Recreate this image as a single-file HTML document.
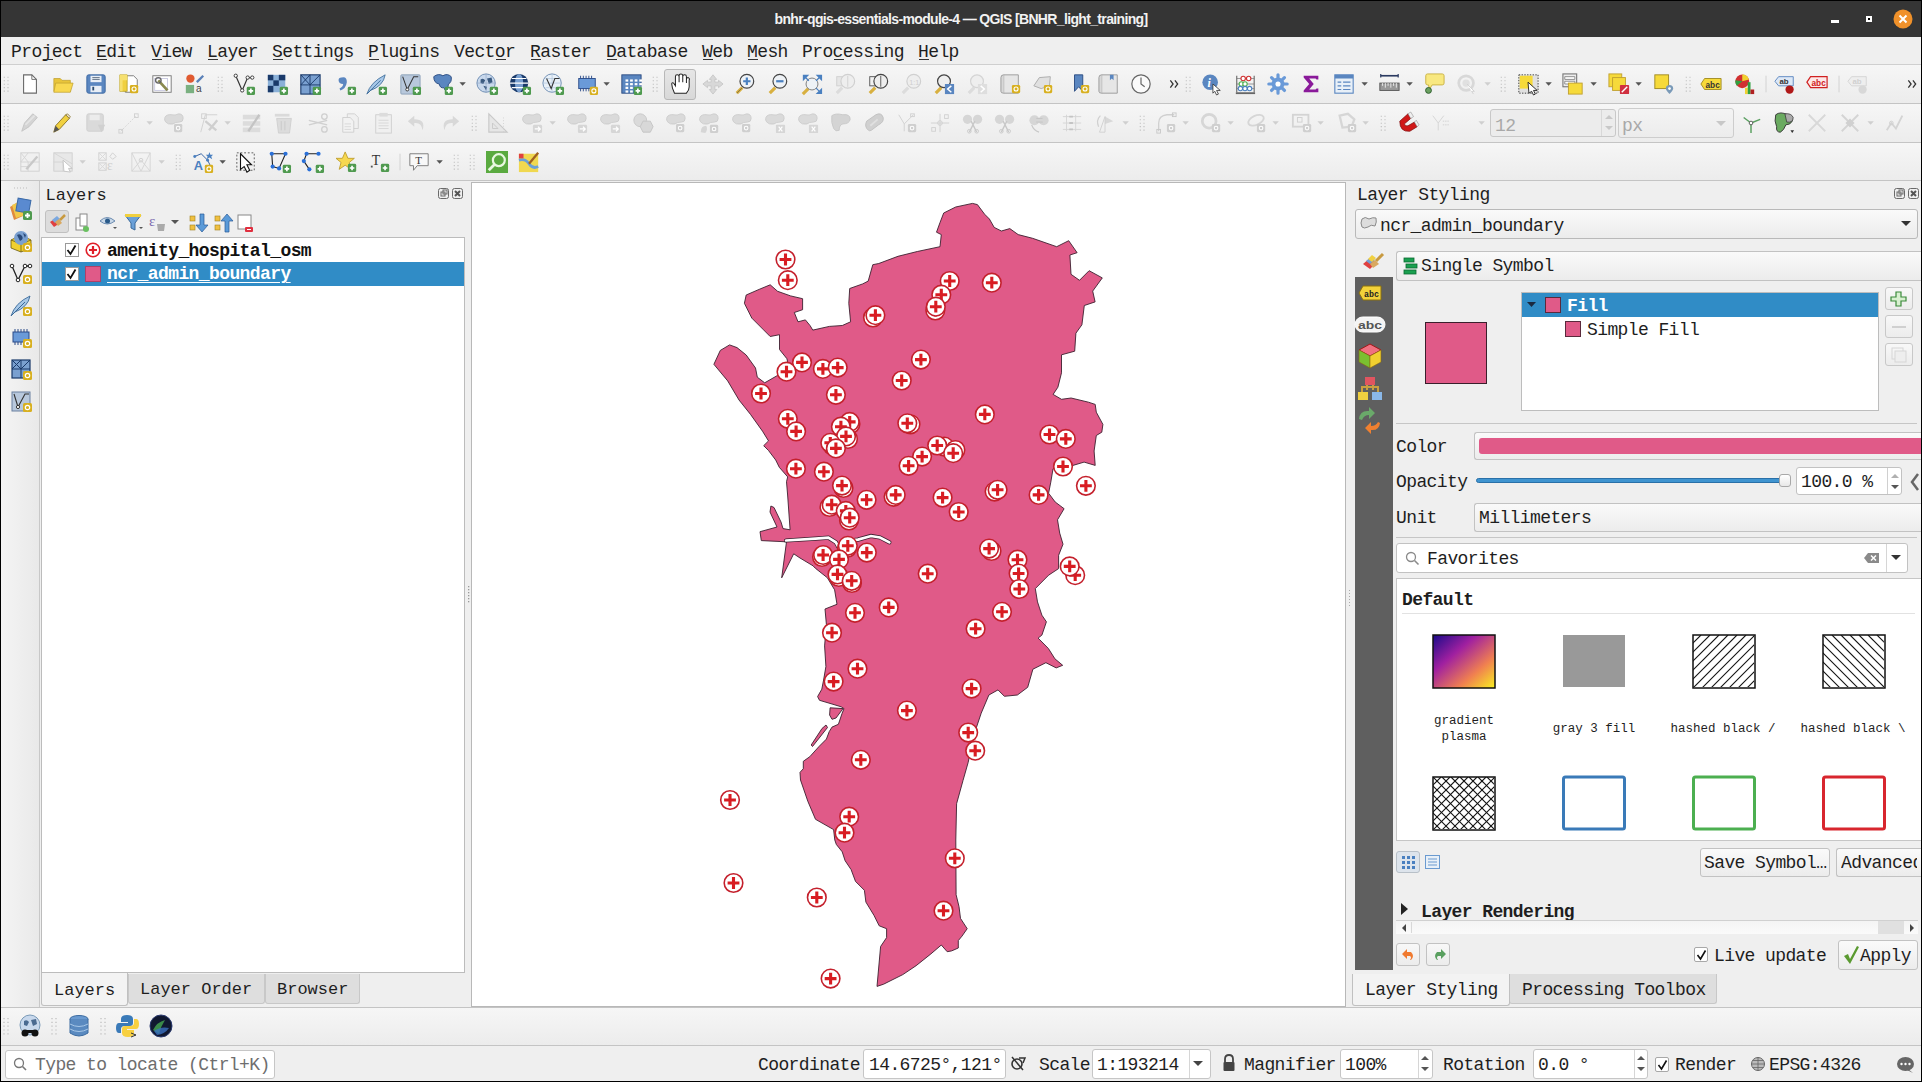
<!DOCTYPE html><html><head><meta charset="utf-8"><style>
html,body{margin:0;padding:0;}
body{width:1922px;height:1082px;position:relative;overflow:hidden;background:#efefef;font-family:"Liberation Mono",monospace;}
.t{position:absolute;white-space:pre;line-height:1;}
svg{position:absolute;overflow:visible;}
</style></head><body>
<div style="position:absolute;left:0px;top:0px;width:1922px;height:1082px;background:#000"></div>
<div style="position:absolute;left:1px;top:1px;width:1920px;height:36px;background:#353535"></div>
<div class="t" style="left:0px;top:12px;font-size:14px;color:#f2f2f2;font-weight:bold;font-family:'Liberation Sans', sans-serif;width:1922px;text-align:center;letter-spacing:-0.65px;">bnhr-qgis-essentials-module-4 — QGIS [BNHR_light_training]</div>
<div style="position:absolute;left:1831px;top:20px;width:8px;height:3px;background:#fff"></div>
<div style="position:absolute;left:1866px;top:16px;width:6px;height:6px;background:#fff"></div>
<div style="position:absolute;left:1868px;top:18px;width:2px;height:2px;background:#000"></div>
<svg style="left:0;top:0" width="1922" height="40"><circle cx="1903" cy="19" r="9.5" fill="#f0912a"/><path d="M1899.5 15.5 L1906.5 22.5 M1906.5 15.5 L1899.5 22.5" stroke="#fff" stroke-width="2"/></svg>
<div style="position:absolute;left:1px;top:37px;width:1920px;height:1044px;background:#efefef"></div>
<div class="t" style="left:11px;top:43.2px;font-size:18px;color:#1e1e1e;font-weight:normal;font-family:'Liberation Mono', monospace;letter-spacing:-0.60px;">Project</div>
<div style="position:absolute;left:43px;top:59px;width:10px;height:1px;background:#333"></div>
<div class="t" style="left:96px;top:43.2px;font-size:18px;color:#1e1e1e;font-weight:normal;font-family:'Liberation Mono', monospace;letter-spacing:-0.60px;">Edit</div>
<div style="position:absolute;left:97px;top:59px;width:10px;height:1px;background:#333"></div>
<div class="t" style="left:151px;top:43.2px;font-size:18px;color:#1e1e1e;font-weight:normal;font-family:'Liberation Mono', monospace;letter-spacing:-0.60px;">View</div>
<div style="position:absolute;left:152px;top:59px;width:10px;height:1px;background:#333"></div>
<div class="t" style="left:207px;top:43.2px;font-size:18px;color:#1e1e1e;font-weight:normal;font-family:'Liberation Mono', monospace;letter-spacing:-0.60px;">Layer</div>
<div style="position:absolute;left:208px;top:59px;width:10px;height:1px;background:#333"></div>
<div class="t" style="left:272px;top:43.2px;font-size:18px;color:#1e1e1e;font-weight:normal;font-family:'Liberation Mono', monospace;letter-spacing:-0.60px;">Settings</div>
<div style="position:absolute;left:273px;top:59px;width:10px;height:1px;background:#333"></div>
<div class="t" style="left:368px;top:43.2px;font-size:18px;color:#1e1e1e;font-weight:normal;font-family:'Liberation Mono', monospace;letter-spacing:-0.60px;">Plugins</div>
<div style="position:absolute;left:369px;top:59px;width:10px;height:1px;background:#333"></div>
<div class="t" style="left:454px;top:43.2px;font-size:18px;color:#1e1e1e;font-weight:normal;font-family:'Liberation Mono', monospace;letter-spacing:-0.60px;">Vector</div>
<div style="position:absolute;left:496px;top:59px;width:10px;height:1px;background:#333"></div>
<div class="t" style="left:530px;top:43.2px;font-size:18px;color:#1e1e1e;font-weight:normal;font-family:'Liberation Mono', monospace;letter-spacing:-0.60px;">Raster</div>
<div style="position:absolute;left:531px;top:59px;width:10px;height:1px;background:#333"></div>
<div class="t" style="left:606px;top:43.2px;font-size:18px;color:#1e1e1e;font-weight:normal;font-family:'Liberation Mono', monospace;letter-spacing:-0.60px;">Database</div>
<div style="position:absolute;left:607px;top:59px;width:10px;height:1px;background:#333"></div>
<div class="t" style="left:702px;top:43.2px;font-size:18px;color:#1e1e1e;font-weight:normal;font-family:'Liberation Mono', monospace;letter-spacing:-0.60px;">Web</div>
<div style="position:absolute;left:703px;top:59px;width:10px;height:1px;background:#333"></div>
<div class="t" style="left:747px;top:43.2px;font-size:18px;color:#1e1e1e;font-weight:normal;font-family:'Liberation Mono', monospace;letter-spacing:-0.60px;">Mesh</div>
<div style="position:absolute;left:748px;top:59px;width:10px;height:1px;background:#333"></div>
<div class="t" style="left:802px;top:43.2px;font-size:18px;color:#1e1e1e;font-weight:normal;font-family:'Liberation Mono', monospace;letter-spacing:-0.60px;">Processing</div>
<div style="position:absolute;left:834px;top:59px;width:10px;height:1px;background:#333"></div>
<div class="t" style="left:918px;top:43.2px;font-size:18px;color:#1e1e1e;font-weight:normal;font-family:'Liberation Mono', monospace;letter-spacing:-0.60px;">Help</div>
<div style="position:absolute;left:919px;top:59px;width:10px;height:1px;background:#333"></div>
<div style="position:absolute;left:1px;top:64px;width:1920px;height:1px;background:#cfcfcf"></div>
<div style="position:absolute;left:1px;top:65px;width:1920px;height:38px;background:linear-gradient(#f6f6f6,#ececec)"></div>
<div style="position:absolute;left:1px;top:103px;width:1920px;height:1px;background:#c4c4c4"></div>
<div style="position:absolute;left:1px;top:104px;width:1920px;height:38px;background:linear-gradient(#f6f6f6,#ececec)"></div>
<div style="position:absolute;left:1px;top:142px;width:1920px;height:1px;background:#c4c4c4"></div>
<div style="position:absolute;left:1px;top:143px;width:1920px;height:37px;background:linear-gradient(#f6f6f6,#ececec)"></div>
<div style="position:absolute;left:1px;top:180px;width:1920px;height:1px;background:#c4c4c4"></div>
<div style="position:absolute;left:1px;top:181px;width:38px;height:826px;background:linear-gradient(90deg,#f4f4f4,#e9e9e9)"></div>
<div style="position:absolute;left:39px;top:181px;width:1px;height:826px;background:#c8c8c8"></div>
<div class="t" style="left:45.5px;top:187px;font-size:17px;color:#1e1e1e;font-weight:normal;font-family:'Liberation Mono', monospace;letter-spacing:0.00px;">Layers</div>
<div style="position:absolute;left:41px;top:237px;width:424px;height:736px;background:#fff;box-sizing:border-box;border:1px solid #bcbcbc"></div>
<div style="position:absolute;left:42px;top:262px;width:422px;height:24px;background:#308cc6"></div>
<div style="position:absolute;left:128px;top:974px;width:137px;height:30px;background:#dedede;box-sizing:border-box;border:1px solid #c8c8c8;border-top:none;border-radius:0 0 3px 3px"></div>
<div style="position:absolute;left:265px;top:974px;width:95px;height:30px;background:#dedede;box-sizing:border-box;border:1px solid #c8c8c8;border-top:none;border-radius:0 0 3px 3px"></div>
<div style="position:absolute;left:41px;top:973px;width:87px;height:33px;background:#f3f3f3;box-sizing:border-box;border:1px solid #c0c0c0;border-top:none;border-radius:0 0 3px 3px"></div>
<div class="t" style="left:54px;top:982px;font-size:17px;color:#1e1e1e;font-weight:normal;font-family:'Liberation Mono', monospace;letter-spacing:0.00px;">Layers</div>
<div class="t" style="left:140px;top:981px;font-size:17px;color:#1e1e1e;font-weight:normal;font-family:'Liberation Mono', monospace;letter-spacing:0.00px;">Layer Order</div>
<div class="t" style="left:277px;top:981px;font-size:17px;color:#1e1e1e;font-weight:normal;font-family:'Liberation Mono', monospace;letter-spacing:0.00px;">Browser</div>
<svg style="left:467px;top:586px" width="4" height="20"><rect x="1" y="0" width="1.3" height="1.3" fill="#999"/><rect x="1" y="3" width="1.3" height="1.3" fill="#999"/><rect x="1" y="6" width="1.3" height="1.3" fill="#999"/><rect x="1" y="9" width="1.3" height="1.3" fill="#999"/><rect x="1" y="12" width="1.3" height="1.3" fill="#999"/><rect x="1" y="15" width="1.3" height="1.3" fill="#999"/></svg>
<svg style="left:1348px;top:590px" width="4" height="50"><rect x="1" y="0" width="1" height="1" fill="#aaa"/><rect x="1" y="3" width="1" height="1" fill="#aaa"/><rect x="1" y="6" width="1" height="1" fill="#aaa"/><rect x="1" y="9" width="1" height="1" fill="#aaa"/><rect x="1" y="12" width="1" height="1" fill="#aaa"/><rect x="1" y="15" width="1" height="1" fill="#aaa"/></svg>
<div style="position:absolute;left:471px;top:182px;width:875px;height:825px;background:#fff;box-sizing:border-box;border:1px solid #b8b8b8"></div>
<div style="position:absolute;left:1px;top:1007px;width:1920px;height:1px;background:#c4c4c4"></div>
<div style="position:absolute;left:1px;top:1008px;width:1920px;height:37px;background:linear-gradient(#f6f6f6,#ececec)"></div>
<div style="position:absolute;left:1px;top:1045px;width:1920px;height:1px;background:#c4c4c4"></div>
<div style="position:absolute;left:1px;top:1046px;width:1920px;height:35px;background:#efefef"></div>
<svg style="left:0;top:0" width="1922" height="1082" viewBox="0 0 1922 1082"><polygon points="955.7,207.0 972.5,203.4 977.4,204.6 984.6,214.2 989.4,219.0 994.2,227.4 1001.4,231.0 1009.8,228.6 1018.2,234.6 1032.6,238.3 1056.7,246.7 1068.7,240.7 1077.1,252.7 1069.9,255.0 1071.0,274.3 1079.5,280.3 1089.1,270.7 1102.3,277.9 1092.7,291.1 1095.1,301.9 1084.3,305.5 1081.9,324.8 1075.9,333.2 1074.7,351.2 1061.5,354.8 1061.5,372.8 1057.9,387.2 1053.1,394.4 1061.5,399.3 1071.1,398.0 1088.5,402.2 1095.2,404.4 1096.3,412.2 1102.9,424.4 1101.8,432.2 1096.3,435.5 1094.1,451.0 1095.2,465.4 1084.1,462.1 1073.0,465.4 1053.0,468.8 1050.8,482.1 1048.6,493.2 1055.2,502.0 1064.1,508.7 1057.5,519.8 1059.7,533.1 1063.0,544.2 1058.6,555.3 1058.6,568.6 1048.6,575.2 1035.3,588.6 1037.5,601.9 1041.9,615.2 1046.4,621.8 1041.9,635.1 1038.1,638.1 1048.4,648.5 1054.9,658.8 1062.7,665.3 1056.2,667.9 1045.9,662.7 1032.9,669.2 1027.7,687.3 1017.4,695.0 1004.4,696.3 998.0,689.9 988.9,695.0 981.2,713.2 973.4,736.5 968.2,762.3 963.0,780.5 956.6,803.7 955.8,840.0 956.1,894.7 959.0,906.6 960.5,918.4 967.2,928.7 962.0,936.1 958.3,940.6 958.3,948.0 951.6,950.9 947.2,951.7 941.3,945.0 930.9,953.9 916.1,965.7 902.8,974.6 883.6,984.2 877.0,986.4 880.6,946.5 886.6,937.6 886.6,928.7 879.2,925.8 874.0,915.4 865.9,902.1 864.4,890.3 855.5,881.4 851.1,869.6 845.1,860.7 842.2,851.8 836.3,844.4 834.8,840.0 833.6,829.6 815.5,819.3 807.8,801.2 800.5,780.0 800.0,772.4 803.3,768.7 803.3,761.3 809.8,756.7 819.0,746.5 826.4,739.1 829.2,731.7 832.0,727.1 838.4,724.3 842.1,713.3 844.0,708.6 841.2,706.8 832.0,704.0 819.5,700.3 817.6,696.6 821.8,689.2 823.6,680.0 825.9,666.6 824.6,645.9 826.4,624.5 825.0,609.0 837.0,604.3 834.6,589.8 827.4,577.8 815.3,568.2 813.0,565.8 800.0,558.0 793.7,553.8 781.7,577.8 786.5,541.8 761.3,540.6 760.0,531.7 777.0,527.0 770.0,512.0 770.9,506.0 774.0,507.5 781.0,522.0 783.0,528.6 790.1,529.8 788.9,513.0 787.7,496.0 786.5,481.7 787.7,476.9 779.3,467.3 775.7,460.0 768.5,450.5 763.7,445.7 768.5,440.9 762.5,431.2 750.5,414.4 739.0,400.0 727.7,380.9 713.9,364.3 720.3,350.4 729.6,344.9 737.0,347.6 746.2,355.0 755.5,368.0 757.3,377.2 764.7,382.8 777.6,375.4 788.7,366.1 786.9,358.7 779.5,349.5 779.5,334.7 770.2,336.5 762.8,329.1 751.8,318.1 744.4,303.3 746.2,295.0 759.1,289.4 770.2,284.8 777.6,291.3 790.6,295.9 802.6,298.7 802.6,309.7 794.3,312.5 798.0,321.8 805.4,319.9 810.0,325.5 812.8,330.1 829.4,326.4 842.3,325.5 850.6,321.8 848.8,303.3 849.7,288.5 862.7,283.9 868.2,281.1 872.8,264.7 878.8,263.5 898.0,256.3 917.3,251.5 940.0,246.7 941.3,234.6 936.5,232.2 940.0,222.6 943.7,213.0" fill="#e05a88" stroke="#3c2030" stroke-width="0.9" stroke-linejoin="round"/><polygon points="830.1,707.8 843,708.6 836,718 832,719.3 829.6,715" fill="#e05a88" stroke="#3c2030" stroke-width="0.9"/><polygon points="826,725 827.5,727.5 812.5,746.5 811.2,745 822,728.5" fill="#e05a88" stroke="#3c2030" stroke-width="0.9"/><path d="M786 540.5 L815.5 538.6 L828.4 537.7 L835.8 542.3 L839 548 M846 541 L858 539.6 L871 536 L880 537.5 L889.4 542.3" fill="none" stroke="#3c2030" stroke-width="4.2" stroke-linecap="round"/><path d="M786 540.5 L815.5 538.6 L828.4 537.7 L835.8 542.3 L839 548 M846 541 L858 539.6 L871 536 L880 537.5 L889.4 542.3" fill="none" stroke="#fff" stroke-width="2.6" stroke-linecap="round"/><defs><g id="hm"><circle r="9.3" fill="#fff" stroke="#c4202c" stroke-width="1.6"/><path d="M-5.9 0H5.9M0 -5.9V5.9" stroke="#d81c22" stroke-width="3.1"/></g></defs><use href="#hm" x="873.0" y="317.5"/><use href="#hm" x="935.3" y="310.5"/><use href="#hm" x="910.5" y="424.3"/><use href="#hm" x="944.3" y="446.6"/><use href="#hm" x="955.4" y="450.0"/><use href="#hm" x="994.6" y="491.6"/><use href="#hm" x="893.6" y="496.8"/><use href="#hm" x="991.5" y="551.0"/><use href="#hm" x="843.5" y="488.0"/><use href="#hm" x="832.5" y="445.5"/><use href="#hm" x="848.0" y="439.0"/><use href="#hm" x="850.5" y="424.0"/><use href="#hm" x="829.5" y="507.0"/><use href="#hm" x="849.0" y="520.5"/><use href="#hm" x="822.0" y="557.0"/><use href="#hm" x="838.8" y="577.0"/><use href="#hm" x="852.0" y="583.0"/><use href="#hm" x="847.0" y="548.0"/><use href="#hm" x="785.5" y="259.5"/><use href="#hm" x="787.8" y="280.2"/><use href="#hm" x="949.7" y="281.0"/><use href="#hm" x="991.8" y="282.7"/><use href="#hm" x="941.3" y="294.7"/><use href="#hm" x="935.8" y="306.7"/><use href="#hm" x="875.4" y="315.2"/><use href="#hm" x="920.9" y="359.6"/><use href="#hm" x="901.7" y="380.5"/><use href="#hm" x="802.0" y="362.4"/><use href="#hm" x="786.5" y="371.7"/><use href="#hm" x="822.9" y="368.9"/><use href="#hm" x="837.7" y="367.6"/><use href="#hm" x="761.0" y="393.5"/><use href="#hm" x="835.9" y="394.8"/><use href="#hm" x="984.8" y="414.4"/><use href="#hm" x="907.3" y="423.3"/><use href="#hm" x="787.8" y="418.8"/><use href="#hm" x="796.1" y="431.4"/><use href="#hm" x="849.7" y="421.9"/><use href="#hm" x="840.9" y="426.7"/><use href="#hm" x="846.0" y="436.4"/><use href="#hm" x="830.3" y="442.8"/><use href="#hm" x="835.9" y="448.4"/><use href="#hm" x="1049.5" y="434.5"/><use href="#hm" x="1065.8" y="438.9"/><use href="#hm" x="937.2" y="445.5"/><use href="#hm" x="953.2" y="453.2"/><use href="#hm" x="922.1" y="456.6"/><use href="#hm" x="908.6" y="465.8"/><use href="#hm" x="1063.0" y="466.5"/><use href="#hm" x="1085.9" y="485.8"/><use href="#hm" x="895.7" y="494.9"/><use href="#hm" x="942.6" y="497.6"/><use href="#hm" x="997.6" y="489.8"/><use href="#hm" x="1038.6" y="494.9"/><use href="#hm" x="958.7" y="512.0"/><use href="#hm" x="795.9" y="468.7"/><use href="#hm" x="823.9" y="471.7"/><use href="#hm" x="842.0" y="485.6"/><use href="#hm" x="866.6" y="499.8"/><use href="#hm" x="831.7" y="504.7"/><use href="#hm" x="845.8" y="510.9"/><use href="#hm" x="849.7" y="517.7"/><use href="#hm" x="847.8" y="545.8"/><use href="#hm" x="866.8" y="552.6"/><use href="#hm" x="823.1" y="555.0"/><use href="#hm" x="839.0" y="559.4"/><use href="#hm" x="837.5" y="574.4"/><use href="#hm" x="851.7" y="580.8"/><use href="#hm" x="989.1" y="548.6"/><use href="#hm" x="1017.5" y="559.7"/><use href="#hm" x="1018.6" y="573.5"/><use href="#hm" x="1019.3" y="589.0"/><use href="#hm" x="1075.2" y="575.2"/><use href="#hm" x="1069.7" y="566.4"/><use href="#hm" x="927.7" y="573.7"/><use href="#hm" x="855.0" y="612.8"/><use href="#hm" x="888.7" y="607.4"/><use href="#hm" x="1002.0" y="611.8"/><use href="#hm" x="832.0" y="632.7"/><use href="#hm" x="975.6" y="628.7"/><use href="#hm" x="857.5" y="668.7"/><use href="#hm" x="833.6" y="681.6"/><use href="#hm" x="971.6" y="688.6"/><use href="#hm" x="906.9" y="710.6"/><use href="#hm" x="968.2" y="732.6"/><use href="#hm" x="975.2" y="750.7"/><use href="#hm" x="860.8" y="759.8"/><use href="#hm" x="730.0" y="800.0"/><use href="#hm" x="849.2" y="816.7"/><use href="#hm" x="844.5" y="832.7"/><use href="#hm" x="954.8" y="858.3"/><use href="#hm" x="733.5" y="883.0"/><use href="#hm" x="816.8" y="897.5"/><use href="#hm" x="943.5" y="910.7"/><use href="#hm" x="830.6" y="978.6"/></svg>
<div class="t" style="left:1357px;top:185.7px;font-size:18px;color:#1e1e1e;font-weight:normal;font-family:'Liberation Mono', monospace;letter-spacing:-0.60px;">Layer Styling</div>
<svg style="left:1894px;top:188px" width="26" height="12"><rect x="0.5" y="0.5" width="10" height="10" rx="2" fill="none" stroke="#6a6a6a"/><rect x="3" y="4" width="4" height="4" fill="none" stroke="#6a6a6a"/><rect x="5" y="2" width="4" height="4" fill="none" stroke="#6a6a6a"/><rect x="14.5" y="0.5" width="10" height="10" rx="2" fill="none" stroke="#6a6a6a"/><path d="M17 3L22 8M22 3L17 8" stroke="#555" stroke-width="2"/></svg>
<svg style="left:438px;top:188px" width="26" height="12"><rect x="0.5" y="0.5" width="10" height="10" rx="2" fill="none" stroke="#6a6a6a"/><rect x="3" y="4" width="4" height="4" fill="none" stroke="#6a6a6a"/><rect x="5" y="2" width="4" height="4" fill="none" stroke="#6a6a6a"/><rect x="14.5" y="0.5" width="10" height="10" rx="2" fill="none" stroke="#6a6a6a"/><path d="M17 3L22 8M22 3L17 8" stroke="#555" stroke-width="2"/></svg>
<div style="position:absolute;left:1355px;top:209px;width:563px;height:30px;background:linear-gradient(#fafafa,#ececec);box-sizing:border-box;border:1px solid #b9b9b9;border-radius:3px"></div>
<svg style="left:1360px;top:216px" width="18" height="14"><path d="M2 3 Q5 0 9 3 Q13 1 16 2 Q17 6 15 10 Q11 8 8 11 Q4 13 2 11 Q0 7 2 3Z" fill="#ddd" stroke="#8a8a8a" stroke-width="1"/></svg>
<div class="t" style="left:1380px;top:216.7px;font-size:18px;color:#1e1e1e;font-weight:normal;font-family:'Liberation Mono', monospace;letter-spacing:-0.60px;">ncr_admin_boundary</div>
<svg style="left:1901px;top:221px" width="11" height="6"><path d="M0 0H10L5 5Z" fill="#333"/></svg>
<svg style="left:1361px;top:252px" width="24" height="20"><path d="M2 12 L9 6 L15 11 L9 17Z" fill="#e04040"/><path d="M5 9 L10 5 L14 8 L9 12Z" fill="#6fa0d8"/><path d="M7 7 L11 3 L15 6 L11 10Z" fill="#f0d040"/><path d="M9 12 L14 8 L18 12 L12 16Z" fill="#d9a860"/><path d="M15 9 L22 2" stroke="#c89a40" stroke-width="3"/></svg>
<div style="position:absolute;left:1355px;top:277px;width:38px;height:693px;background:#5f5f5f"></div>
<div style="position:absolute;left:1396px;top:251px;width:525px;height:30px;background:linear-gradient(#fafafa,#ececec);box-sizing:border-box;border:1px solid #c2c2c2;border-right:none;border-radius:3px 0 0 3px"></div>
<svg style="left:1403px;top:258px" width="15" height="16"><rect x="1" y="0" width="10" height="4" fill="#1aa050" stroke="#0a6a30" stroke-width="0.8"/><rect x="3" y="6" width="11" height="4" fill="#1aa050" stroke="#0a6a30" stroke-width="0.8"/><rect x="1" y="12" width="12" height="4" fill="#1aa050" stroke="#0a6a30" stroke-width="0.8"/></svg>
<div class="t" style="left:1421px;top:257.2px;font-size:18px;color:#1e1e1e;font-weight:normal;font-family:'Liberation Mono', monospace;letter-spacing:-0.60px;">Single Symbol</div>
<div style="position:absolute;left:1425px;top:322px;width:62px;height:62px;background:#e05a88;box-sizing:border-box;border:1.5px solid #3a1f2c"></div>
<div style="position:absolute;left:1521px;top:292px;width:358px;height:119px;background:#fff;box-sizing:border-box;border:1px solid #bdbdbd"></div>
<div style="position:absolute;left:1522px;top:293px;width:356px;height:24px;background:#308cc6"></div>
<svg style="left:1527px;top:302px" width="10" height="6"><path d="M0 0H9L4.5 5Z" fill="#1a2a40"/></svg>
<div style="position:absolute;left:1545px;top:297px;width:16px;height:16px;background:#e05a88;box-sizing:border-box;border:1px solid #5a2a3c"></div>
<div class="t" style="left:1567px;top:297.2px;font-size:18px;color:#fff;font-weight:bold;font-family:'Liberation Mono', monospace;letter-spacing:-0.60px;">Fill</div>
<div style="position:absolute;left:1565px;top:321px;width:16px;height:16px;background:#e05a88;box-sizing:border-box;border:1px solid #5a2a3c"></div>
<div class="t" style="left:1587px;top:320.7px;font-size:18px;color:#1e1e1e;font-weight:normal;font-family:'Liberation Mono', monospace;letter-spacing:-0.60px;">Simple Fill</div>
<div style="position:absolute;left:1885px;top:287px;width:28px;height:23px;background:linear-gradient(#f8f8f8,#ececec);box-sizing:border-box;border:1px solid #c8c8c8;border-radius:3px"></div>
<div style="position:absolute;left:1885px;top:315px;width:28px;height:23px;background:linear-gradient(#f8f8f8,#ececec);box-sizing:border-box;border:1px solid #c8c8c8;border-radius:3px"></div>
<div style="position:absolute;left:1885px;top:343px;width:28px;height:23px;background:linear-gradient(#f8f8f8,#ececec);box-sizing:border-box;border:1px solid #c8c8c8;border-radius:3px"></div>
<svg style="left:1889px;top:291px" width="20" height="16"><path d="M7 1H12V6H17V10H12V15H7V10H2V6H7Z" fill="#d8f0d0" stroke="#3a8a3a" stroke-width="1.2"/></svg>
<div style="position:absolute;left:1892px;top:326px;width:14px;height:2px;background:#d0d0d0"></div>
<svg style="left:1891px;top:347px" width="16" height="16"><rect x="1" y="1" width="11" height="11" fill="none" stroke="#d6d6d6"/><rect x="4" y="4" width="11" height="11" fill="#eee" stroke="#d6d6d6"/></svg>
<div style="position:absolute;left:1396px;top:423px;width:521px;height:1px;background:#c6c6c6"></div>
<div class="t" style="left:1396px;top:438.2px;font-size:18px;color:#1e1e1e;font-weight:normal;font-family:'Liberation Mono', monospace;letter-spacing:-0.60px;">Color</div>
<div style="position:absolute;left:1474px;top:432px;width:447px;height:28px;background:linear-gradient(#fafafa,#ececec);box-sizing:border-box;border:1px solid #c2c2c2;border-right:none;border-radius:3px 0 0 3px"></div>
<div style="position:absolute;left:1479px;top:438px;width:442px;height:16px;background:#e05a88;border-radius:3px 0 0 3px"></div>
<div class="t" style="left:1396px;top:472.7px;font-size:18px;color:#1e1e1e;font-weight:normal;font-family:'Liberation Mono', monospace;letter-spacing:-0.60px;">Opacity</div>
<div style="position:absolute;left:1476px;top:478px;width:310px;height:3px;background:#3f94d0;border:1px solid #2a70a8;border-radius:3px"></div>
<div style="position:absolute;left:1779px;top:474px;width:12px;height:13px;background:linear-gradient(#fff,#e8e8e8);box-sizing:border-box;border:1px solid #a8a8a8;border-radius:3px"></div>
<div style="position:absolute;left:1796px;top:467px;width:106px;height:28px;background:#fff;box-sizing:border-box;border:1px solid #c2c2c2;border-radius:3px"></div>
<div style="position:absolute;left:1887px;top:468px;width:1px;height:26px;background:#d0d0d0"></div>
<svg style="left:1890px;top:473px" width="10" height="18"><path d="M1 5L5 1L9 5Z" fill="#b0b0b0"/><path d="M1 12H9L5 16Z" fill="#555"/></svg>
<div class="t" style="left:1801px;top:472.7px;font-size:18px;color:#1e1e1e;font-weight:normal;font-family:'Liberation Mono', monospace;letter-spacing:-0.60px;">100.0 %</div>
<svg style="left:1908px;top:472px" width="14" height="20"><path d="M10 2 L4 10 L10 18" fill="none" stroke="#666" stroke-width="2.5"/></svg>
<div class="t" style="left:1396px;top:508.7px;font-size:18px;color:#1e1e1e;font-weight:normal;font-family:'Liberation Mono', monospace;letter-spacing:-0.60px;">Unit</div>
<div style="position:absolute;left:1474px;top:503px;width:447px;height:29px;background:linear-gradient(#fafafa,#ececec);box-sizing:border-box;border:1px solid #c2c2c2;border-right:none;border-radius:3px 0 0 3px"></div>
<div class="t" style="left:1479px;top:508.7px;font-size:18px;color:#1e1e1e;font-weight:normal;font-family:'Liberation Mono', monospace;letter-spacing:-0.60px;">Millimeters</div>
<div style="position:absolute;left:1396px;top:537px;width:521px;height:1px;background:#c6c6c6"></div>
<div style="position:absolute;left:1396px;top:543px;width:512px;height:30px;background:#fff;box-sizing:border-box;border:1px solid #c2c2c2;border-radius:3px"></div>
<div style="position:absolute;left:1886px;top:544px;width:1px;height:28px;background:#d6d6d6"></div>
<svg style="left:1405px;top:551px" width="16" height="16"><circle cx="6" cy="6" r="4.5" fill="none" stroke="#8a8a8a" stroke-width="1.3"/><path d="M9.5 9.5L13.5 13.5" stroke="#8a8a8a" stroke-width="1.6"/></svg>
<div class="t" style="left:1427px;top:550.2px;font-size:18px;color:#1e1e1e;font-weight:normal;font-family:'Liberation Mono', monospace;letter-spacing:-0.60px;">Favorites</div>
<svg style="left:1864px;top:552px" width="16" height="12"><path d="M4 1H15V11H4L0 6Z" fill="#8a8a8a"/><path d="M7 3.5L12 8.5M12 3.5L7 8.5" stroke="#fff" stroke-width="1.5"/></svg>
<svg style="left:1891px;top:555px" width="11" height="6"><path d="M0 0H10L5 5Z" fill="#333"/></svg>
<div style="position:absolute;left:1396px;top:578px;width:525px;height:263px;background:#fff;box-sizing:border-box;border:1px solid #c6c6c6;border-right:none"></div>
<div class="t" style="left:1402px;top:591.2px;font-size:18px;color:#1e1e1e;font-weight:bold;font-family:'Liberation Mono', monospace;letter-spacing:-0.60px;">Default</div>
<div style="position:absolute;left:1402px;top:613px;width:513px;height:1px;background:#e2e2e2"></div>
<svg style="left:1351px;top:277px" width="38" height="160">
<path d="M8 16 L12 9 H30 V23 H12Z" fill="#f3d23a" stroke="#8a7010" stroke-width="1"/><text x="13" y="19.5" font-family="'Liberation Mono',monospace" font-size="9" font-weight="bold" fill="#222" textLength="15" lengthAdjust="spacingAndGlyphs">abc</text>
<rect x="4" y="40" width="30" height="15" rx="7.5" fill="#f4f4f4" stroke="#fff"/><text x="7" y="51.5" font-family="'Liberation Sans',sans-serif" font-size="11" font-weight="bold" fill="#555" textLength="24" lengthAdjust="spacingAndGlyphs">abc</text>
<path d="M19 67 L30 73 L19 79 L8 73Z" fill="#f07080" stroke="#a01818" stroke-width="1"/><path d="M8 73 L19 79 V91 L8 85Z" fill="#7ac030" stroke="#8a6a10" stroke-width="0.6"/><path d="M30 73 L19 79 V91 L30 85Z" fill="#f0d030" stroke="#8a6a10" stroke-width="0.6"/>
<rect x="14" y="100" width="10" height="8" fill="#e05560"/><rect x="7" y="115" width="10" height="8" fill="#f0d040"/><rect x="21" y="115" width="10" height="8" fill="#8ab8e8"/><path d="M16 108 V113 M22 108 V113 M11 115 V110 H27 V115" stroke="#c9a040" stroke-width="2" fill="none"/>
<path d="M8 142 Q9 133 18 134 L18 130 L24 136 L18 142 L18 138 Q13 138 11 143Z" fill="#6aaa6a"/><path d="M29 146 Q28 154 20 153 L20 157 L14 151 L20 145 L20 149 Q25 149 27 145Z" fill="#f08030"/>
</svg>
<svg style="left:1396px;top:578px" width="525" height="262">
<defs>
<linearGradient id="gp" x1="0" y1="0" x2="1" y2="1"><stop offset="0" stop-color="#1a0a8a"/><stop offset="0.35" stop-color="#a020a0"/><stop offset="0.7" stop-color="#f08050"/><stop offset="1" stop-color="#f8f020"/></linearGradient>
<clipPath id="c1"><rect x="297" y="57" width="61" height="52"/></clipPath>
<clipPath id="c2"><rect x="427" y="57" width="61" height="52"/></clipPath>
<clipPath id="c3"><rect x="37" y="199" width="61" height="52"/></clipPath>
</defs>
<rect x="37" y="57" width="62" height="53" fill="url(#gp)" stroke="#111" stroke-width="1.5"/>
<rect x="167" y="57" width="62" height="52" fill="#999"/>
<rect x="297" y="57" width="62" height="53" fill="#fff" stroke="#111" stroke-width="1.5"/>
<g clip-path="url(#c1)" stroke="#111" stroke-width="1.1"><path d="M243 110 L296 57"/><path d="M252 110 L305 57"/><path d="M261 110 L314 57"/><path d="M270 110 L323 57"/><path d="M279 110 L332 57"/><path d="M288 110 L341 57"/><path d="M297 110 L350 57"/><path d="M306 110 L359 57"/><path d="M315 110 L368 57"/><path d="M324 110 L377 57"/><path d="M333 110 L386 57"/><path d="M342 110 L395 57"/><path d="M351 110 L404 57"/><path d="M360 110 L413 57"/></g>
<rect x="427" y="57" width="62" height="53" fill="#fff" stroke="#111" stroke-width="1.5"/>
<g clip-path="url(#c2)" stroke="#111" stroke-width="1.1"><path d="M373 57 L426 110"/><path d="M382 57 L435 110"/><path d="M391 57 L444 110"/><path d="M400 57 L453 110"/><path d="M409 57 L462 110"/><path d="M418 57 L471 110"/><path d="M427 57 L480 110"/><path d="M436 57 L489 110"/><path d="M445 57 L498 110"/><path d="M454 57 L507 110"/><path d="M463 57 L516 110"/><path d="M472 57 L525 110"/><path d="M481 57 L534 110"/><path d="M490 57 L543 110"/></g>
<rect x="37" y="199" width="62" height="53" fill="#fff" stroke="#111" stroke-width="1.5"/>
<g clip-path="url(#c3)" stroke="#111" stroke-width="1.1"><path d="M-17 252 L36 199"/><path d="M-17 199 L36 252"/><path d="M-8 252 L45 199"/><path d="M-8 199 L45 252"/><path d="M1 252 L54 199"/><path d="M1 199 L54 252"/><path d="M10 252 L63 199"/><path d="M10 199 L63 252"/><path d="M19 252 L72 199"/><path d="M19 199 L72 252"/><path d="M28 252 L81 199"/><path d="M28 199 L81 252"/><path d="M37 252 L90 199"/><path d="M37 199 L90 252"/><path d="M46 252 L99 199"/><path d="M46 199 L99 252"/><path d="M55 252 L108 199"/><path d="M55 199 L108 252"/><path d="M64 252 L117 199"/><path d="M64 199 L117 252"/><path d="M73 252 L126 199"/><path d="M73 199 L126 252"/><path d="M82 252 L135 199"/><path d="M82 199 L135 252"/><path d="M91 252 L144 199"/><path d="M91 199 L144 252"/><path d="M100 252 L153 199"/><path d="M100 199 L153 252"/></g>
<rect x="167.5" y="199" width="61" height="52" rx="2" fill="#fff" stroke="#3a7ab8" stroke-width="3"/>
<rect x="297.5" y="199" width="61" height="52" rx="2" fill="#fff" stroke="#4caf50" stroke-width="3"/>
<rect x="427.5" y="199" width="61" height="52" rx="2" fill="#fff" stroke="#d8262e" stroke-width="3"/>
</svg>
<div class="t" style="left:1434.0px;top:715.42px;font-size:12.5px;color:#1e1e1e;font-weight:normal;font-family:'Liberation Mono', monospace;letter-spacing:0;">gradient</div>
<div class="t" style="left:1441.5px;top:731.42px;font-size:12.5px;color:#1e1e1e;font-weight:normal;font-family:'Liberation Mono', monospace;letter-spacing:0;">plasma</div>
<div class="t" style="left:1552.8px;top:723.42px;font-size:12.5px;color:#1e1e1e;font-weight:normal;font-family:'Liberation Mono', monospace;letter-spacing:0;">gray 3 fill</div>
<div class="t" style="left:1670.5px;top:723.42px;font-size:12.5px;color:#1e1e1e;font-weight:normal;font-family:'Liberation Mono', monospace;letter-spacing:0;">hashed black /</div>
<div class="t" style="left:1800.5px;top:723.42px;font-size:12.5px;color:#1e1e1e;font-weight:normal;font-family:'Liberation Mono', monospace;letter-spacing:0;">hashed black \</div>
<div style="position:absolute;left:1396px;top:851px;width:24px;height:22px;background:#dde4ec;box-sizing:border-box;border:1px solid #b8c0c8;border-radius:3px"></div>
<svg style="left:1400px;top:854px" width="40" height="16"><rect x="2" y="2" width="3" height="3" fill="#4a80c0"/><rect x="2" y="7" width="3" height="3" fill="#4a80c0"/><rect x="2" y="12" width="3" height="3" fill="#4a80c0"/><rect x="7" y="2" width="3" height="3" fill="#4a80c0"/><rect x="7" y="7" width="3" height="3" fill="#4a80c0"/><rect x="7" y="12" width="3" height="3" fill="#4a80c0"/><rect x="12" y="2" width="3" height="3" fill="#4a80c0"/><rect x="12" y="7" width="3" height="3" fill="#4a80c0"/><rect x="12" y="12" width="3" height="3" fill="#4a80c0"/><rect x="25.5" y="1.5" width="14" height="13" fill="#e8f0f8" stroke="#6a9ad0"/><path d="M28 5H37M28 8H37M28 11H37" stroke="#6a9ad0"/></svg>
<div style="position:absolute;left:1700px;top:848px;width:130px;height:29px;background:linear-gradient(#fafafa,#ececec);box-sizing:border-box;border:1px solid #c2c2c2;border-radius:3px"></div>
<div class="t" style="left:1704px;top:854.2px;font-size:18px;color:#1e1e1e;font-weight:normal;font-family:'Liberation Mono', monospace;letter-spacing:-0.60px;">Save Symbol…</div>
<div style="position:absolute;left:1836px;top:848px;width:86px;height:29px;background:linear-gradient(#fafafa,#ececec);box-sizing:border-box;border:1px solid #c2c2c2;border-right:none;border-radius:3px 0 0 3px"></div>
<div class="t" style="left:1841px;top:854.2px;font-size:18px;color:#1e1e1e;font-weight:normal;font-family:'Liberation Mono', monospace;letter-spacing:-0.6px;width:76px;overflow:hidden;">Advanced</div>
<svg style="left:1400px;top:902px" width="10" height="14"><path d="M1 1L8 7L1 13Z" fill="#222"/></svg>
<div class="t" style="left:1421px;top:903.2px;font-size:18px;color:#1e1e1e;font-weight:bold;font-family:'Liberation Mono', monospace;letter-spacing:-0.60px;">Layer Rendering</div>
<div style="position:absolute;left:1396px;top:920px;width:522px;height:14px;background:linear-gradient(#f4f4f4,#fafafa);box-sizing:border-box;border-top:1px solid #d0d0d0"></div>
<div style="position:absolute;left:1878px;top:921px;width:26px;height:13px;background:#e0e0e0"></div>
<svg style="left:1400px;top:922px" width="520" height="12"><path d="M6 2L2 6L6 10Z" fill="#444"/><path d="M510 2L514 6L510 10Z" fill="#444"/></svg>
<div style="position:absolute;left:1411px;top:922px;width:1px;height:11px;background:#d8d8d8"></div>
<div style="position:absolute;left:1396px;top:943px;width:24px;height:23px;background:linear-gradient(#f8f8f8,#ececec);box-sizing:border-box;border:1px solid #c2c2c2;border-radius:3px"></div>
<div style="position:absolute;left:1426px;top:943px;width:24px;height:23px;background:linear-gradient(#f8f8f8,#ececec);box-sizing:border-box;border:1px solid #c2c2c2;border-radius:3px"></div>
<svg style="left:1399px;top:946px" width="50" height="18"><path d="M12 14 Q16 10 12 6 L8 6 L8 3 L3 8 L8 13 L8 10 L11 10 Q13 11 11 14Z" fill="#f07a30"/><path d="M38 14 Q34 10 38 6 L42 6 L42 3 L47 8 L42 13 L42 10 L39 10 Q37 11 39 14Z" fill="#5aa060"/></svg>
<div style="position:absolute;left:1694px;top:947px;width:14px;height:15px;background:#fff;box-sizing:border-box;border:1px solid #a8a8a8;border-radius:2px"></div>
<svg style="left:1696px;top:949px" width="12" height="12"><path d="M1.5 6L4.5 10L9.5 1.5" fill="none" stroke="#111" stroke-width="1.6"/></svg>
<div class="t" style="left:1714px;top:947.2px;font-size:18px;color:#1e1e1e;font-weight:normal;font-family:'Liberation Mono', monospace;letter-spacing:-0.60px;">Live update</div>
<div style="position:absolute;left:1838px;top:940px;width:80px;height:30px;background:linear-gradient(#fafafa,#ececec);box-sizing:border-box;border:1px solid #c2c2c2;border-radius:3px"></div>
<svg style="left:1842px;top:945px" width="18" height="20"><path d="M2 11 L6 9 L8 14 L15 1 L17 2 L8 19Z" fill="#5a9a30"/></svg>
<div class="t" style="left:1860px;top:947.2px;font-size:18px;color:#1e1e1e;font-weight:normal;font-family:'Liberation Mono', monospace;letter-spacing:-0.60px;">Apply</div>
<div style="position:absolute;left:1509px;top:974px;width:208px;height:30px;background:#dedede;box-sizing:border-box;border:1px solid #c8c8c8;border-top:none;border-radius:0 0 3px 3px"></div>
<div style="position:absolute;left:1352px;top:974px;width:158px;height:32px;background:#f3f3f3;box-sizing:border-box;border:1px solid #c0c0c0;border-top:none;border-radius:0 0 3px 3px"></div>
<div class="t" style="left:1365px;top:981.2px;font-size:18px;color:#1e1e1e;font-weight:normal;font-family:'Liberation Mono', monospace;letter-spacing:-0.60px;">Layer Styling</div>
<div class="t" style="left:1522px;top:981.2px;font-size:18px;color:#1e1e1e;font-weight:normal;font-family:'Liberation Mono', monospace;letter-spacing:-0.60px;">Processing Toolbox</div>
<div style="position:absolute;left:45px;top:210px;width:24px;height:23px;background:#dcdcdc;box-sizing:border-box;border:1px solid #c0c0c0;border-radius:3px"></div>
<svg style="left:45px;top:207px" width="210" height="30">
<path d="M5 15 L11 11 L15 16 L9 20Z" fill="#e04040"/><path d="M7 13 L12 9 L15 12 L10 16Z" fill="#7aa8e0"/><path d="M10 15 L14 12 L17 16 L13 19Z" fill="#d9a860"/><path d="M15 13 L20 8" stroke="#c89a40" stroke-width="2.5"/>
<rect x="31" y="11" width="8" height="12" fill="#fff" stroke="#888"/><rect x="35" y="7" width="7" height="12" fill="#fff" stroke="#888"/><circle cx="41" cy="22" r="3" fill="#6ac060"/>
<path d="M55 14 Q62 7 70 14 Q62 20 55 14Z" fill="#c8d8e8" stroke="#6a8ab0"/><circle cx="62.5" cy="14" r="2.5" fill="#2a5a8a"/><path d="M68 20H72L70 22Z" fill="#555"/>
<path d="M80 8 H96 L90 16 V23 L86 21 V16Z" fill="#6aa0d8" stroke="#3a6a9a"/><rect x="80" y="7" width="16" height="3" fill="#f0d040"/><path d="M94 20H98L96 22Z" fill="#555"/>
<text x="104" y="19" font-family="'Liberation Serif',serif" font-size="15" fill="#7a6ab0">ε</text><path d="M112 17 H120 L119 24 H113Z" fill="#aaa"/><path d="M126 13H134L130 17Z" fill="#555"/>
<rect x="145" y="9" width="5" height="5" fill="#f0c040" stroke="#a08020" stroke-width="0.6"/><rect x="145" y="18" width="5" height="5" fill="#f0c040" stroke="#a08020" stroke-width="0.6"/><path d="M155 7 V18 H151 L157 25 L163 18 H159 V7Z" fill="#5a9ad8" stroke="#2a5a98" stroke-width="0.7"/>
<rect x="170" y="9" width="5" height="5" fill="#f0c040" stroke="#a08020" stroke-width="0.6"/><rect x="170" y="18" width="5" height="5" fill="#f0c040" stroke="#a08020" stroke-width="0.6"/><path d="M180 25 V14 H176 L182 7 L188 14 H184 V25Z" fill="#5a9ad8" stroke="#2a5a98" stroke-width="0.7"/>
<rect x="193" y="8" width="13" height="14" fill="#fff" stroke="#888"/><rect x="200" y="20" width="8" height="5" rx="1" fill="#e03040"/><rect x="202" y="22" width="4" height="1" fill="#fff"/>
</svg>
<div style="position:absolute;left:65px;top:243px;width:14px;height:14px;background:#fff;box-sizing:border-box;border:1px solid #9a9a9a"></div>
<svg style="left:66px;top:244px" width="12" height="12"><path d="M1.5 6L4.5 10L9.5 1.5" fill="none" stroke="#111" stroke-width="1.8"/></svg>
<div style="position:absolute;left:65px;top:267px;width:14px;height:14px;background:#fff;box-sizing:border-box;border:1px solid #9a9a9a"></div>
<svg style="left:66px;top:268px" width="12" height="12"><path d="M1.5 6L4.5 10L9.5 1.5" fill="none" stroke="#111" stroke-width="1.8"/></svg>
<svg style="left:84px;top:241px" width="18" height="18"><circle cx="9" cy="9" r="6.8" fill="#fff" stroke="#e0202a" stroke-width="1.6"/><path d="M5 9H13M9 5V13" stroke="#e0202a" stroke-width="2.2"/></svg>
<div style="position:absolute;left:85px;top:266px;width:16px;height:16px;background:#e05a88;box-sizing:border-box;border:1px solid #b04068"></div>
<div class="t" style="left:107px;top:242.2px;font-size:18px;color:#111;font-weight:bold;font-family:'Liberation Mono', monospace;letter-spacing:-0.60px;">amenity_hospital_osm</div>
<div class="t" style="left:107px;top:265.2px;font-size:18px;color:#fff;font-weight:bold;font-family:'Liberation Mono', monospace;text-decoration:underline;text-underline-offset:3px;letter-spacing:-0.60px;">ncr_admin_boundary</div>
<svg style="left:0;top:0" width="60" height="420"><path d="M14 188 H29" stroke="#bbb" stroke-dasharray="1 2"/><g transform="translate(9.0,197.0) scale(1.000)"><path d="M1 10 L9 5 L14 19 L5 23Z" fill="#e08a40"/><path d="M3 8 L12 4 L16 18 L7 21Z" fill="#f2c84a"/><rect x="8" y="2" width="13" height="13" transform="rotate(10 14 8)" fill="#5a8ad0" stroke="#3a6aa8"/><rect x="14" y="14" width="9" height="9" rx="1.5" fill="#4f9a4f"/><path d="M18.5 16V21M16 18.5H21" stroke="#fff" stroke-width="1.8"/></g><g transform="translate(9.0,229.0) scale(1.000)"><path d="M2 11 L12 6 L22 11 V19 L12 23 L2 19Z" fill="#f0d030" stroke="#6a5a10" stroke-width="0.8"/><path d="M2 11 L12 15 L22 11 M12 15 V23" stroke="#6a5a10" stroke-width="0.8" fill="none"/><circle cx="12" cy="9" r="7" fill="#7aa0d0"/><path d="M8 6 Q11 4 13 7 Q15 10 11 12Z M14 4 L17 6 L16 9Z" fill="#2a4a7a"/><rect x="14" y="14" width="9" height="9" rx="1.5" fill="#d8b020"/><circle cx="18.5" cy="18.5" r="2.2" fill="none" stroke="#fff" stroke-width="1.2"/></g><g transform="translate(9.0,261.0) scale(1.000)"><path d="M3 5 L9 19 L16 5 L21 5" fill="none" stroke="#222" stroke-width="1.3"/><circle cx="3" cy="5" r="1.8" fill="#fff" stroke="#222"/><circle cx="9" cy="19" r="1.8" fill="#fff" stroke="#222"/><circle cx="16" cy="5" r="1.8" fill="#fff" stroke="#222"/><circle cx="21" cy="5" r="1.8" fill="#fff" stroke="#222"/><rect x="14" y="14" width="9" height="9" rx="1.5" fill="#d8b020"/><circle cx="18.5" cy="18.5" r="2.2" fill="none" stroke="#fff" stroke-width="1.2"/></g><g transform="translate(9.0,293.0) scale(1.000)"><path d="M2 23 Q6 10 21 3 Q19 14 6 19Z" fill="#a8c8e8" stroke="#3a6a98" stroke-width="0.9"/><path d="M3 22L16 9" stroke="#3a6a98"/><rect x="14" y="14" width="9" height="9" rx="1.5" fill="#d8b020"/><circle cx="18.5" cy="18.5" r="2.2" fill="none" stroke="#fff" stroke-width="1.2"/></g><g transform="translate(9.0,325.0) scale(1.000)"><rect x="4" y="7" width="16" height="10" fill="#6a9ad8" stroke="#2a4a88"/><path d="M6 4V7M9 4V7M12 4V7M15 4V7M18 4V7M6 17V20M9 17V20M12 17V20" stroke="#2a4a88"/><rect x="14" y="14" width="9" height="9" rx="1.5" fill="#d8b020"/><circle cx="18.5" cy="18.5" r="2.2" fill="none" stroke="#fff" stroke-width="1.2"/></g><g transform="translate(9.0,357.0) scale(1.000)"><rect x="3" y="3" width="18" height="18" fill="#7aa0d0" stroke="#1a3a6a" stroke-width="1.2"/><path d="M3 12H21M12 3V21M3 3L12 12M12 3L3 12M12 12L21 3" stroke="#1a3a6a" fill="none"/><rect x="14" y="14" width="9" height="9" rx="1.5" fill="#d8b020"/><circle cx="18.5" cy="18.5" r="2.2" fill="none" stroke="#fff" stroke-width="1.2"/></g><g transform="translate(9.0,389.0) scale(1.000)"><rect x="3" y="3" width="18" height="19" fill="#b8c8dc" stroke="#6a80a0"/><path d="M5 5L9 18L16 5L20 5" fill="none" stroke="#333" stroke-width="1.1"/><circle cx="9" cy="18" r="1.6" fill="#fff" stroke="#333"/><rect x="14" y="14" width="9" height="9" rx="1.5" fill="#d8b020"/><circle cx="18.5" cy="18.5" r="2.2" fill="none" stroke="#fff" stroke-width="1.2"/></g></svg>
<div style="position:absolute;left:664px;top:69px;width:32px;height:31px;background:linear-gradient(#e6e6e6,#d8d8d8);box-sizing:border-box;border:1px solid #b8b8b8;border-radius:3px"></div>
<svg style="left:0;top:0" width="1922" height="1082"><g transform="translate(-3.0,73.0) scale(0.917)"><path d="M8 4V21M12 4V21" stroke="#c4c4c4" stroke-width="1.4" stroke-dasharray="1.2 2.6"/></g><g transform="translate(19.0,73.0) scale(0.917)"><path d="M5 2H14L19 7V22H5Z" fill="#fff" stroke="#6a6a6a" stroke-width="1.2"/><path d="M14 2V7H19" fill="none" stroke="#6a6a6a"/></g><g transform="translate(52.0,73.0) scale(0.917)"><path d="M2 6H9L11 8H20V20H2Z" fill="#e8c43a" stroke="#c0a030" stroke-width="0.8"/><path d="M4 11H23L20 21H2Z" fill="#f8d850" stroke="#c0a030" stroke-width="0.8"/></g><g transform="translate(85.0,73.0) scale(0.917)"><rect x="2" y="2" width="20" height="20" rx="2" fill="#5a86c0" stroke="#3a66a0"/><rect x="6" y="3" width="12" height="7" fill="#e8eef6"/><path d="M8 5H16M8 7H16" stroke="#5a6a80"/><rect x="6" y="14" width="12" height="7" fill="#e8eef6"/><rect x="8" y="15" width="2" height="4" fill="#2a4a70"/></g><g transform="translate(118.0,73.0) scale(0.917)"><path d="M8 3H17L21 7V21H8Z" fill="#fff" stroke="#777"/><path d="M2 2H10V20H2Z" fill="#f0d040" stroke="#b09a20" stroke-width="0.8"/><path d="M2 2H10V8H5V20H2Z" fill="#f6e070"/><rect x="13" y="13" width="9" height="9" rx="1.5" fill="#d8b020"/><circle cx="17.5" cy="17.5" r="2.2" fill="none" stroke="#fff" stroke-width="1.2"/></g><g transform="translate(151.0,73.0) scale(0.917)"><rect x="2" y="3" width="20" height="18" fill="#fff" stroke="#777"/><rect x="4" y="6" width="14" height="13" fill="none" stroke="#c8c8e0"/><path d="M8 8 L18 19" stroke="#8a8a50" stroke-width="3"/><circle cx="8" cy="8" r="3" fill="none" stroke="#666" stroke-width="1.5"/></g><g transform="translate(184.0,73.0) scale(0.917)"><circle cx="7" cy="6" r="4.5" fill="#e05a30"/><path d="M14 10L21 3" stroke="#5a80b8" stroke-width="2.5"/><rect x="2" y="13" width="9" height="9" fill="#7ab080"/><text x="13" y="21" font-family="Liberation Sans" font-size="11" fill="#444">a</text></g><g transform="translate(211.0,73.0) scale(0.917)"><path d="M8 4V21M12 4V21" stroke="#c4c4c4" stroke-width="1.4" stroke-dasharray="1.2 2.6"/></g><g transform="translate(233.0,73.0) scale(0.917)"><path d="M3 3L10 19L16 5L21 5" fill="none" stroke="#333" stroke-width="1.3"/><circle cx="3" cy="3" r="1.8" fill="#fff" stroke="#333"/><circle cx="10" cy="19" r="1.8" fill="#fff" stroke="#333"/><circle cx="16" cy="5" r="1.8" fill="#fff" stroke="#333"/><circle cx="21" cy="5" r="1.8" fill="#fff" stroke="#333"/><rect x="15" y="15" width="9" height="9" rx="1.5" fill="#4f9a4f"/><path d="M19.5 17V22M17 19.5H22" stroke="#fff" stroke-width="1.8"/></g><g transform="translate(266.0,73.0) scale(0.917)"><rect x="2" y="2" width="19" height="19" fill="#8ab0d8"/><rect x="2" y="2" width="6" height="6" fill="#1a3a6a"/><rect x="14" y="2" width="7" height="6" fill="#1a3a6a"/><rect x="8" y="8" width="6" height="6" fill="#1a3a6a"/><rect x="2" y="14" width="6" height="7" fill="#1a3a6a"/><rect x="15" y="15" width="9" height="9" rx="1.5" fill="#4f9a4f"/><path d="M19.5 17V22M17 19.5H22" stroke="#fff" stroke-width="1.8"/></g><g transform="translate(299.0,73.0) scale(0.917)"><rect x="2" y="2" width="21" height="21" fill="#7aa0d0" stroke="#1a3a6a" stroke-width="1.2"/><path d="M2 13H23M12 2V23M2 2L12 13M12 2L2 13M12 13L23 2" stroke="#1a3a6a" fill="none"/><rect x="15" y="15" width="9" height="9" rx="1.5" fill="#4f9a4f"/><path d="M19.5 17V22M17 19.5H22" stroke="#fff" stroke-width="1.8"/></g><g transform="translate(334.0,73.0) scale(0.917)"><path d="M8 5 Q14 3 14 10 Q13 17 7 19 L6 17 Q10 15 10 12 Q5 12 5 8 Q5 5 8 5Z" fill="#5a86c0"/><rect x="15" y="15" width="9" height="9" rx="1.5" fill="#4f9a4f"/><path d="M19.5 17V22M17 19.5H22" stroke="#fff" stroke-width="1.8"/></g><g transform="translate(365.0,73.0) scale(0.917)"><path d="M2 23 Q6 10 22 2 Q20 14 6 19Z" fill="#a8c8e8" stroke="#3a6a98" stroke-width="0.9"/><path d="M3 22L17 8" stroke="#3a6a98"/><rect x="15" y="15" width="9" height="9" rx="1.5" fill="#4f9a4f"/><path d="M19.5 17V22M17 19.5H22" stroke="#fff" stroke-width="1.8"/></g><g transform="translate(399.0,73.0) scale(0.917)"><rect x="2" y="2" width="21" height="21" rx="1" fill="#b8c8dc" stroke="#8aa0b8"/><path d="M4 4L9 18L16 4L21 4" fill="none" stroke="#333" stroke-width="1.1"/><circle cx="9" cy="18" r="1.6" fill="#fff" stroke="#333"/><rect x="15" y="15" width="9" height="9" rx="1.5" fill="#4f9a4f"/><path d="M19.5 17V22M17 19.5H22" stroke="#fff" stroke-width="1.8"/></g><g transform="translate(431.0,73.0) scale(0.917)"><path d="M3 4 Q8 0 13 3 Q18 0 22 4 Q23 10 19 12 L18 19 Q15 20 14 16 Q10 17 9 12 Q3 11 3 4Z" fill="#5a86c0" stroke="#2a4a80"/><rect x="15" y="15" width="9" height="9" rx="1.5" fill="#4f9a4f"/><path d="M19.5 17V22M17 19.5H22" stroke="#fff" stroke-width="1.8"/></g><g transform="translate(453.0,73.0) scale(0.917)"><path d="M7 10H14L10.5 14Z" fill="#555"/></g><g transform="translate(476.0,73.0) scale(0.917)"><circle cx="11" cy="11" r="10" fill="#c8d8ec" stroke="#6a8ab0"/><path d="M5 7Q8 5 10 8L8 12L5 11Z M12 6L17 5L18 10L14 12Z M8 14L12 15L11 19Z" fill="#3a5a80"/><path d="M1 11H21M11 1V21" stroke="#8aa0c0" stroke-width="0.6"/><rect x="15" y="15" width="9" height="9" rx="1.5" fill="#4f9a4f"/><path d="M19.5 17V22M17 19.5H22" stroke="#fff" stroke-width="1.8"/></g><g transform="translate(509.0,73.0) scale(0.917)"><circle cx="11" cy="11" r="10" fill="#1a3a6a"/><ellipse cx="11" cy="11" rx="4.5" ry="10" fill="#7aa0d0"/><path d="M1 11H21M3 6H19M3 16H19" stroke="#fff" stroke-width="1.3"/><rect x="15" y="15" width="9" height="9" rx="1.5" fill="#4f9a4f"/><path d="M19.5 17V22M17 19.5H22" stroke="#fff" stroke-width="1.8"/></g><g transform="translate(542.0,73.0) scale(0.917)"><circle cx="11" cy="11" r="10" fill="#e8f0f8" stroke="#6a8ab0"/><path d="M1 11H21M11 1V21M4 6H18M4 16H18" stroke="#aac0d8" stroke-width="0.7"/><path d="M5 6L10 17L14 6L19 6" fill="none" stroke="#333" stroke-width="1.2"/><rect x="15" y="15" width="9" height="9" rx="1.5" fill="#4f9a4f"/><path d="M19.5 17V22M17 19.5H22" stroke="#fff" stroke-width="1.8"/></g><g transform="translate(576.0,73.0) scale(0.917)"><rect x="3" y="6" width="18" height="11" fill="#6a9ad8" stroke="#2a4a88"/><path d="M5 3V6M8 3V6M11 3V6M14 3V6M17 3V6M5 17V20M8 17V20M11 17V20M14 17V20" stroke="#2a4a88"/><rect x="15" y="15" width="9" height="9" rx="1.5" fill="#d8b020"/><circle cx="19.5" cy="19.5" r="2.2" fill="none" stroke="#fff" stroke-width="1.2"/></g><g transform="translate(597.0,73.0) scale(0.917)"><path d="M7 10H14L10.5 14Z" fill="#555"/></g><g transform="translate(620.0,73.0) scale(0.917)"><rect x="2" y="2" width="21" height="20" fill="#5a86c0" stroke="#2a4a80"/><rect x="6" y="7" width="3" height="2.4" fill="#fff"/><rect x="6" y="11" width="3" height="2.4" fill="#fff"/><rect x="6" y="15" width="3" height="2.4" fill="#fff"/><rect x="6" y="19" width="3" height="2.4" fill="#fff"/><rect x="11" y="7" width="3" height="2.4" fill="#fff"/><rect x="11" y="11" width="3" height="2.4" fill="#fff"/><rect x="11" y="15" width="3" height="2.4" fill="#fff"/><rect x="11" y="19" width="3" height="2.4" fill="#fff"/><rect x="16" y="7" width="3" height="2.4" fill="#fff"/><rect x="16" y="11" width="3" height="2.4" fill="#fff"/><rect x="16" y="15" width="3" height="2.4" fill="#fff"/><rect x="16" y="19" width="3" height="2.4" fill="#fff"/><rect x="21" y="7" width="3" height="2.4" fill="#fff"/><rect x="21" y="11" width="3" height="2.4" fill="#fff"/><rect x="21" y="15" width="3" height="2.4" fill="#fff"/><rect x="21" y="19" width="3" height="2.4" fill="#fff"/><rect x="15" y="15" width="9" height="9" rx="1.5" fill="#4f9a4f"/><path d="M19.5 17V22M17 19.5H22" stroke="#fff" stroke-width="1.8"/></g><g transform="translate(646.0,73.0) scale(0.917)"><path d="M8 4V21M12 4V21" stroke="#c4c4c4" stroke-width="1.4" stroke-dasharray="1.2 2.6"/></g><g transform="translate(669.0,73.0) scale(0.917)"><path d="M6 22 Q3 16 3 12 Q3 10 5 11 L7 14 V4 Q7 2 9 2 Q11 2 11 4 V10 V3 Q11 1 13 1 Q15 1 15 3 V10 V4 Q15 2 17 2 Q19 2 19 4 V11 V7 Q19 5 21 5 Q23 6 22 8 V15 Q22 19 19 22Z" fill="#fff" stroke="#222" stroke-width="1.1"/></g><g transform="translate(702.0,73.0) scale(0.917)"><path d="M12 2L16 7H14V10H18V8L23 12L18 16V14H14V18H16L12 23L8 18H10V14H6V16L1 12L6 8V10H10V7H8Z" fill="#d8d8d8" stroke="#c8c8c8"/></g><g transform="translate(734.0,73.0) scale(0.917)"><path d="M3 22L9 16" stroke="#d8b040" stroke-width="3.5"/><path d="M3 22L9 16" stroke="#444" stroke-width="0.6"/><circle cx="14" cy="9" r="7.5" fill="#eef2f6" stroke="#444" stroke-width="1.3"/><path d="M10 9H18M14 5V13" stroke="#4a80c0" stroke-width="2.4"/></g><g transform="translate(767.0,73.0) scale(0.917)"><path d="M3 22L9 16" stroke="#d8b040" stroke-width="3.5"/><circle cx="14" cy="9" r="7.5" fill="#eef2f6" stroke="#444" stroke-width="1.3"/><path d="M10 9H18" stroke="#4a80c0" stroke-width="2.4"/></g><g transform="translate(801.0,73.0) scale(0.917)"><path d="M2 23L8 17" stroke="#d8b040" stroke-width="3.5"/><circle cx="12" cy="12" r="6.5" fill="#eef2f6" stroke="#777"/><path d="M2 2H9L6 5L9 8L8 9L5 6L2 9Z M23 23H16L19 20L16 17L17 16L20 19L23 16Z M23 2V9L20 6L17 9L16 8L19 5L16 2Z" fill="#4a80c0"/></g><g transform="translate(834.0,73.0) scale(0.917)"><path d="M3 22L9 16" stroke="#dcdcdc" stroke-width="3.5"/><rect x="3" y="4" width="8" height="10" fill="#e6e6e6" stroke="#d0d0d0"/><circle cx="15" cy="9" r="7.5" fill="#eeeeee" stroke="#d0d0d0" stroke-width="1.3"/><path d="M15 3V15" stroke="#d0d0d0"/></g><g transform="translate(867.0,73.0) scale(0.917)"><path d="M3 22L9 16" stroke="#d8b040" stroke-width="3.5"/><rect x="3" y="4" width="8" height="10" fill="#f2f2f2" stroke="#555"/><circle cx="15" cy="9" r="7.5" fill="#eeeeee" stroke="#444" stroke-width="1.3"/><path d="M15 3V15" stroke="#555"/></g><g transform="translate(900.0,73.0) scale(0.917)"><path d="M3 22L9 16" stroke="#dcdcdc" stroke-width="3.5"/><circle cx="15" cy="9" r="7.5" fill="#eeeeee" stroke="#d0d0d0" stroke-width="1.3"/><text x="10" y="13" font-family="Liberation Sans" font-size="8" fill="#cfcfcf">1:1</text></g><g transform="translate(933.0,73.0) scale(0.917)"><path d="M3 22L9 16" stroke="#d8b040" stroke-width="3.5"/><circle cx="12" cy="9" r="7" fill="#eeeeee" stroke="#444" stroke-width="1.3"/><rect x="13" y="12" width="10" height="11" fill="#5a86c0"/><path d="M20 14L16 17.5L20 21" stroke="#fff" stroke-width="1.6" fill="none"/></g><g transform="translate(966.0,73.0) scale(0.917)"><path d="M3 22L9 16" stroke="#dcdcdc" stroke-width="3.5"/><circle cx="12" cy="9" r="7" fill="#eeeeee" stroke="#d4d4d4" stroke-width="1.3"/><rect x="13" y="12" width="10" height="11" fill="#dedede"/><path d="M16 14L20 17.5L16 21" stroke="#fff" stroke-width="1.6" fill="none"/></g><g transform="translate(1000.0,73.0) scale(0.917)"><path d="M4 2H20V22H4Z" fill="#e6e6e6" stroke="#999"/><path d="M4 2Q1 2 1 5V20Q1 22 4 22" fill="#d8d8d8" stroke="#999"/><rect x="13" y="13" width="9" height="9" rx="1.5" fill="#d8b020"/><circle cx="17.5" cy="17.5" r="2.2" fill="none" stroke="#fff" stroke-width="1.2"/></g><g transform="translate(1032.0,73.0) scale(0.917)"><path d="M2 14L8 5L20 4L19 14L10 17Z" fill="#e0e0e0" stroke="#aaa"/><rect x="13" y="13" width="9" height="9" rx="1.5" fill="#d8b020"/><circle cx="17.5" cy="17.5" r="2.2" fill="none" stroke="#fff" stroke-width="1.2"/></g><g transform="translate(1069.0,73.0) scale(0.917)"><path d="M6 2H15V20L10.5 15L6 20Z" fill="#5a86c0" stroke="#2a4a80"/><rect x="13" y="13" width="9" height="9" rx="1.5" fill="#d8b020"/><circle cx="17.5" cy="17.5" r="2.2" fill="none" stroke="#fff" stroke-width="1.2"/></g><g transform="translate(1098.0,73.0) scale(0.917)"><path d="M4 2H21V22H4Z" fill="#e6e6e6" stroke="#999"/><path d="M4 2Q1 2 1 5V20Q1 22 4 22" fill="#d8d8d8" stroke="#999"/><path d="M13 2H17V8L15 6L13 8Z" fill="#5a86c0"/></g><g transform="translate(1130.0,73.0) scale(0.917)"><circle cx="12" cy="12" r="10" fill="#fafafa" stroke="#666" stroke-width="1.3"/><path d="M12 5V12L16 15" stroke="#666" stroke-width="1.3" fill="none"/></g><g transform="translate(1163.0,73.0) scale(0.917)"><path d="M8 8L11 12L8 16M13 8L16 12L13 16" stroke="#333" stroke-width="1.4" fill="none"/></g><g transform="translate(1179.0,73.0) scale(0.917)"><path d="M8 4V21M12 4V21" stroke="#c4c4c4" stroke-width="1.4" stroke-dasharray="1.2 2.6"/></g><g transform="translate(1201.0,73.0) scale(0.917)"><circle cx="10" cy="10" r="8.5" fill="#5a86c0"/><text x="7" y="15" font-family="Liberation Serif" font-style="italic" font-weight="bold" font-size="13" fill="#fff">i</text><path d="M13 12L21 19L17 19L19 23L17 24L15 20L13 22Z" fill="#fff" stroke="#333" stroke-width="0.9"/></g><g transform="translate(1234.0,73.0) scale(0.917)"><rect x="2" y="21" width="21" height="2" fill="#666"/><path d="M3 3V21M22 3V21" stroke="#666" stroke-width="1.2"/><path d="M3 6H22M3 12H22M3 17H22" stroke="#777" stroke-width="0.8"/><circle cx="10" cy="6" r="2.4" fill="#fff" stroke="#d03030" stroke-width="1.2"/><circle cx="16" cy="6" r="2.4" fill="#fff" stroke="#d03030" stroke-width="1.2"/><circle cx="8" cy="12" r="2.4" fill="#fff" stroke="#50b050" stroke-width="1.2"/><circle cx="12" cy="12" r="2.4" fill="#fff" stroke="#50b050" stroke-width="1.2"/><circle cx="7" cy="17" r="2.4" fill="#fff" stroke="#4a80c0" stroke-width="1.2"/><circle cx="12" cy="17" r="2.4" fill="#fff" stroke="#4a80c0" stroke-width="1.2"/><circle cx="17" cy="17" r="2.4" fill="#fff" stroke="#4a80c0" stroke-width="1.2"/></g><g transform="translate(1267.0,73.0) scale(0.917)"><circle cx="12" cy="12" r="7" fill="#6a9ad8"/><path d="M12 2V22M2 12H22M5 5L19 19M19 5L5 19" stroke="#6a9ad8" stroke-width="3.5" stroke-linecap="round"/><circle cx="12" cy="12" r="2.8" fill="#fff"/></g><g transform="translate(1300.0,73.0) scale(0.917)"><path d="M4 3H20V7H18L17 6H10L15 12L10 18H17L18 17H20V21H4V19L10 12L4 5Z" fill="#8a1a9a"/></g><g transform="translate(1333.0,73.0) scale(0.917)"><rect x="2" y="2" width="20" height="20" fill="#e8f0f8" stroke="#5a86c0" stroke-width="1.2"/><rect x="2" y="2" width="20" height="4" fill="#5a86c0"/><path d="M5 10H9M11 10H19M5 14H9M11 14H19M5 18H9M11 18H19" stroke="#5a86c0" stroke-width="1.2"/></g><g transform="translate(1355.0,73.0) scale(0.917)"><path d="M7 10H14L10.5 14Z" fill="#555"/></g><g transform="translate(1378.0,73.0) scale(0.917)"><path d="M3 3H22" stroke="#2a3a60" stroke-width="1.8"/><path d="M3 1V5M22 1V5" stroke="#2a3a60" stroke-width="1.3"/><rect x="2" y="11" width="21" height="8" fill="#999" stroke="#555"/><path d="M5 11V14M8 11V16M11 11V14M14 11V16M17 11V14M20 11V16" stroke="#eee"/></g><g transform="translate(1400.0,73.0) scale(0.917)"><path d="M7 10H14L10.5 14Z" fill="#555"/></g><g transform="translate(1423.0,73.0) scale(0.917)"><path d="M3 3Q3 1 5 1H21Q23 1 23 3V11Q23 13 21 13H10L7 18L6 13H5Q3 13 3 11Z" fill="#f8e880" stroke="#c8b040"/><circle cx="6" cy="19" r="3.2" fill="#6aa060" stroke="#2a5a2a"/></g><g transform="translate(1456.0,73.0) scale(0.917)"><circle cx="11" cy="11" r="8" fill="none" stroke="#d8d8d8" stroke-width="3"/><circle cx="11" cy="11" r="4" fill="#e0e0e0"/><path d="M12 12L20 20L17 20L19 23" stroke="#d0d0d0" fill="#fff"/></g><g transform="translate(1478.0,73.0) scale(0.917)"><path d="M7 10H14L10.5 14Z" fill="#cfcfcf"/></g><g transform="translate(1494.0,73.0) scale(0.917)"><path d="M8 4V21M12 4V21" stroke="#c4c4c4" stroke-width="1.4" stroke-dasharray="1.2 2.6"/></g><g transform="translate(1517.0,73.0) scale(0.917)"><rect x="2" y="2" width="21" height="20" fill="#e0e0e0" stroke="#333" stroke-dasharray="1.5 1.5"/><rect x="3" y="3" width="14" height="14" fill="#f6da3a"/><path d="M12 10L22 19L18 19L20 23L18 24L16 20L13 22Z" fill="#fff" stroke="#222"/></g><g transform="translate(1539.0,73.0) scale(0.917)"><path d="M7 10H14L10.5 14Z" fill="#555"/></g><g transform="translate(1562.0,73.0) scale(0.917)"><rect x="1" y="1" width="15" height="14" fill="#eee" stroke="#777" stroke-width="1.2"/><path d="M3 4H14V7H3Z M3 9H14V12H3Z" fill="#fff" stroke="#888"/><rect x="7" y="11" width="15" height="12" fill="#f6da3a" stroke="#c0a030"/></g><g transform="translate(1584.0,73.0) scale(0.917)"><path d="M7 10H14L10.5 14Z" fill="#555"/></g><g transform="translate(1608.0,73.0) scale(0.917)"><rect x="1" y="1" width="14" height="14" fill="#f6da3a" stroke="#c0a030"/><rect x="5" y="5" width="14" height="14" fill="#f6da3a" stroke="#c0a030"/><rect x="13" y="13" width="10" height="10" rx="1" fill="#d03040"/><path d="M15 21L21 15" stroke="#fff" stroke-width="1.5"/></g><g transform="translate(1629.0,73.0) scale(0.917)"><path d="M7 10H14L10.5 14Z" fill="#555"/></g><g transform="translate(1653.0,73.0) scale(0.917)"><rect x="2" y="2" width="15" height="15" fill="#f6da3a" stroke="#a08a20"/><path d="M18 13Q22 13 22 17Q22 19 18 23Q14 19 14 17Q14 13 18 13Z" fill="#7a9ab8"/><circle cx="18" cy="17" r="1.5" fill="#fff"/></g><g transform="translate(1679.0,73.0) scale(0.917)"><path d="M8 4V21M12 4V21" stroke="#c4c4c4" stroke-width="1.4" stroke-dasharray="1.2 2.6"/></g><g transform="translate(1700.0,73.0) scale(0.917)"><path d="M1 12L5 6H23V18H5Z" fill="#f6da3a" stroke="#a08a20"/><text x="6" y="16" font-family="Liberation Sans" font-weight="bold" font-size="9" fill="#333">abc</text></g><g transform="translate(1734.0,73.0) scale(0.917)"><circle cx="9" cy="9" r="7.5" fill="#d03030"/><path d="M9 9V1.5A7.5 7.5 0 0 1 16.3 7Z" fill="#f0d030"/><path d="M9 9L3 14A7.5 7.5 0 0 1 1.5 8Z" fill="#30a040"/><rect x="12" y="16" width="3" height="7" fill="#f0d030"/><rect x="15" y="10" width="3" height="13" fill="#30a040"/><rect x="18" y="18" width="4" height="5" fill="#b02020"/></g><g transform="translate(1755.0,73.0) scale(0.917)"><path d="M12 3V21" stroke="#d0d0d0"/></g><g transform="translate(1774.0,73.0) scale(0.917)"><path d="M1 9L5 4H21V14H5Z" fill="#dde8f6" stroke="#5a86c0"/><text x="6" y="12.5" font-family="Liberation Sans" font-weight="bold" font-size="8.5" fill="#333">ab</text><circle cx="17" cy="18" r="4.5" fill="#b01818"/></g><g transform="translate(1806.0,73.0) scale(0.917)"><path d="M1 10L5 4H23V16H5Z" fill="#fde8e8" stroke="#d02020" stroke-width="1.3"/><text x="6" y="14" font-family="Liberation Sans" font-weight="bold" font-size="9" fill="#d02020">abc</text></g><g transform="translate(1828.0,73.0) scale(0.917)"><path d="M12 3V21" stroke="#d0d0d0"/></g><g transform="translate(1847.0,73.0) scale(0.917)"><path d="M1 9L5 4H21V14H5Z" fill="#eeeeee" stroke="#d4d4d4"/><text x="6" y="12.5" font-family="Liberation Sans" font-weight="bold" font-size="8.5" fill="#d0d0d0">ab</text><circle cx="17" cy="18" r="4.5" fill="#d8d8d8"/></g><g transform="translate(1901.0,73.0) scale(0.917)"><path d="M8 8L11 12L8 16M13 8L16 12L13 16" stroke="#333" stroke-width="1.4" fill="none"/></g><g transform="translate(-3.0,112.0) scale(0.917)"><path d="M8 4V21M12 4V21" stroke="#c4c4c4" stroke-width="1.4" stroke-dasharray="1.2 2.6"/></g><g transform="translate(19.0,112.0) scale(0.917)"><path d="M3 21L6 12L15 2L20 6L11 16Z" fill="#d4d4d4" stroke="#c4c4c4"/><path d="M7 14L17 4" stroke="#e4e4e4" stroke-width="2"/></g><g transform="translate(51.0,112.0) scale(0.917)"><path d="M3 22L5 15L16 3L20 7L9 19Z" fill="#f0d040" stroke="#806a20" stroke-width="0.9"/><path d="M16 3L20 7L21 5L18 2Z" fill="#e8e0c8" stroke="#806a20" stroke-width="0.8"/><path d="M3 22L5 15L9 19Z" fill="#555"/></g><g transform="translate(85.0,112.0) scale(0.917)"><rect x="2" y="2" width="18" height="19" rx="2" fill="#dadada" stroke="#cfcfcf"/><rect x="5" y="3" width="11" height="6" fill="#ececec"/><path d="M14 14L22 14L18 22Z" fill="#d0d0d0"/></g><g transform="translate(118.0,112.0) scale(0.917)"><path d="M3 21L20 4" stroke="#d4d4d4" stroke-dasharray="2 1.5"/><rect x="1" y="19" width="4" height="4" fill="none" stroke="#d0d0d0"/><rect x="18" y="2" width="4" height="4" fill="none" stroke="#d0d0d0"/></g><g transform="translate(140.0,112.0) scale(0.917)"><path d="M7 10H14L10.5 14Z" fill="#cfcfcf"/></g><g transform="translate(163.0,112.0) scale(0.917)"><path d="M2 6 Q4 2 10 3 Q13 4 17 2 Q22 2 22 7 Q22 11 18 11 Q13 11 11 13 Q5 14 3 11 Q1 9 2 6Z" fill="#dadada" stroke="#c8c8c8" stroke-width="0.8"/><rect x="12" y="13" width="9" height="9" rx="1.5" fill="#cfcfcf"/><circle cx="16.5" cy="17.5" r="2" fill="none" stroke="#fff" stroke-width="1.1"/></g><g transform="translate(198.0,112.0) scale(0.917)"><path d="M3 22L8 3H21" stroke="#d0d0d0" fill="none"/><rect x="4" y="2" width="5" height="5" fill="none" stroke="#d0d0d0"/><path d="M8 10L20 20M12 20L21 9" stroke="#cfcfcf" stroke-width="2.5"/></g><g transform="translate(218.0,112.0) scale(0.917)"><path d="M7 10H14L10.5 14Z" fill="#cfcfcf"/></g><g transform="translate(241.0,112.0) scale(0.917)"><rect x="2" y="3" width="19" height="5" fill="#dcdcdc"/><rect x="2" y="10" width="19" height="5" fill="#dcdcdc"/><rect x="2" y="17" width="19" height="5" fill="#dcdcdc"/><path d="M8 21L20 3" stroke="#c4c4c4" stroke-width="2.5"/></g><g transform="translate(273.0,112.0) scale(0.917)"><rect x="2" y="2" width="16" height="3" fill="#dadada"/><path d="M4 7H20L18 23H6Z" fill="#dcdcdc" stroke="#cfcfcf"/><path d="M9 10V20M13 10V20" stroke="#c8c8c8"/></g><g transform="translate(307.0,112.0) scale(0.917)"><path d="M2 9L22 14M2 14L22 9" stroke="#d0d0d0" stroke-width="1.4"/><circle cx="19" cy="5" r="3" fill="none" stroke="#cfcfcf" stroke-width="1.4"/><circle cx="19" cy="19" r="3" fill="none" stroke="#cfcfcf" stroke-width="1.4"/></g><g transform="translate(340.0,112.0) scale(0.917)"><path d="M8 2H16L20 6V18H8Z" fill="#f0f0f0" stroke="#d0d0d0"/><path d="M3 6H11L15 10V22H3Z" fill="#f2f2f2" stroke="#cfcfcf"/><path d="M5 13H12M5 16H12M5 19H12" stroke="#d8d8d8"/></g><g transform="translate(373.0,112.0) scale(0.917)"><rect x="3" y="3" width="17" height="20" fill="#f0f0f0" stroke="#cfcfcf"/><rect x="7" y="1" width="9" height="4" fill="#dcdcdc"/><path d="M6 9H17M6 12H17M6 15H17M6 18H17" stroke="#d6d6d6"/></g><g transform="translate(406.0,112.0) scale(0.917)"><path d="M9 4L2 10L9 16V12Q17 11 18 20Q22 8 9 8Z" fill="#d8d8d8"/></g><g transform="translate(439.0,112.0) scale(0.917)"><path d="M15 4L22 10L15 16V12Q7 11 6 20Q2 8 15 8Z" fill="#d8d8d8"/></g><g transform="translate(465.0,112.0) scale(0.917)"><path d="M8 4V21M12 4V21" stroke="#c4c4c4" stroke-width="1.4" stroke-dasharray="1.2 2.6"/></g><g transform="translate(487.0,112.0) scale(0.917)"><path d="M2 22V2L22 22Z" fill="#e6e6e6" stroke="#c8c8c8" stroke-width="1.2"/><path d="M6 18V12L12 18Z" fill="none" stroke="#c8c8c8"/><path d="M18 6V22" stroke="#d0d0d0" stroke-dasharray="1 2"/></g><g transform="translate(521.0,112.0) scale(0.917)"><path d="M2 6 Q4 2 10 3 Q13 4 17 2 Q22 2 22 7 Q22 11 18 11 Q13 11 11 13 Q5 14 3 11 Q1 9 2 6Z" fill="#dadada" stroke="#c8c8c8" stroke-width="0.8"/><rect x="13" y="14" width="10" height="9" rx="1.5" fill="#d6d6d6"/><path d="M15 18.5H21M18.5 16L21 18.5L18.5 21" stroke="#fff" stroke-width="1.3" fill="none"/></g><g transform="translate(543.0,112.0) scale(0.917)"><path d="M7 10H14L10.5 14Z" fill="#cfcfcf"/></g><g transform="translate(566.0,112.0) scale(0.917)"><path d="M2 6 Q4 2 10 3 Q13 4 17 2 Q22 2 22 7 Q22 11 18 11 Q13 11 11 13 Q5 14 3 11 Q1 9 2 6Z" fill="#dadada" stroke="#c8c8c8" stroke-width="0.8"/><rect x="13" y="14" width="10" height="9" rx="1.5" fill="#d6d6d6"/><path d="M15 18.5H21M18.5 16L21 18.5L18.5 21" stroke="#fff" stroke-width="1.3" fill="none"/></g><g transform="translate(599.0,112.0) scale(0.917)"><path d="M2 6 Q4 2 10 3 Q13 4 17 2 Q22 2 22 7 Q22 11 18 11 Q13 11 11 13 Q5 14 3 11 Q1 9 2 6Z" fill="#dadada" stroke="#c8c8c8" stroke-width="0.8"/><rect x="13" y="14" width="10" height="9" rx="1.5" fill="#d6d6d6"/><path d="M15 18.5H21M18.5 16L21 18.5L18.5 21" stroke="#fff" stroke-width="1.3" fill="none"/></g><g transform="translate(632.0,112.0) scale(0.917)"><circle cx="9" cy="9" r="7" fill="#dadada" stroke="#c8c8c8"/><path d="M12 10L20 10L23 16L20 22L12 22L9 16Z" fill="#d8d8d8" stroke="#c4c4c4"/></g><g transform="translate(665.0,112.0) scale(0.917)"><path d="M2 6 Q4 2 10 3 Q13 4 17 2 Q22 2 22 7 Q22 11 18 11 Q13 11 11 13 Q5 14 3 11 Q1 9 2 6Z" fill="#dadada" stroke="#c8c8c8" stroke-width="0.8"/><rect x="12" y="13" width="9" height="9" rx="1.5" fill="#cfcfcf"/><circle cx="16.5" cy="17.5" r="2" fill="none" stroke="#fff" stroke-width="1.1"/></g><g transform="translate(698.0,112.0) scale(0.917)"><path d="M2 6 Q4 2 10 3 Q13 4 17 2 Q22 2 22 7 Q22 11 18 11 Q13 11 11 13 Q5 14 3 11 Q1 9 2 6Z" fill="#dadada" stroke="#c8c8c8" stroke-width="0.8"/><path d="M3 22 Q3 15 9 15 Q11 19 8 23Z" fill="#d6d6d6"/><rect x="13" y="14" width="9" height="9" rx="1.5" fill="#cfcfcf"/><circle cx="17.5" cy="18.5" r="2" fill="none" stroke="#fff" stroke-width="1.1"/></g><g transform="translate(731.0,112.0) scale(0.917)"><path d="M2 6 Q4 2 10 3 Q13 4 17 2 Q22 2 22 7 Q22 11 18 11 Q13 11 11 13 Q5 14 3 11 Q1 9 2 6Z" fill="#dadada" stroke="#c8c8c8" stroke-width="0.8"/><rect x="12" y="13" width="9" height="9" rx="1.5" fill="#cfcfcf"/><circle cx="16.5" cy="17.5" r="2" fill="none" stroke="#fff" stroke-width="1.1"/></g><g transform="translate(764.0,112.0) scale(0.917)"><path d="M2 6 Q4 2 10 3 Q13 4 17 2 Q22 2 22 7 Q22 11 18 11 Q13 11 11 13 Q5 14 3 11 Q1 9 2 6Z" fill="#dadada" stroke="#c8c8c8" stroke-width="0.8"/><rect x="13" y="14" width="10" height="9" rx="1" fill="#d6d6d6"/><path d="M16 16L20 21M20 16L16 21" stroke="#fff" stroke-width="1.3"/></g><g transform="translate(797.0,112.0) scale(0.917)"><path d="M2 6 Q4 2 10 3 Q13 4 17 2 Q22 2 22 7 Q22 11 18 11 Q13 11 11 13 Q5 14 3 11 Q1 9 2 6Z" fill="#dadada" stroke="#c8c8c8" stroke-width="0.8"/><rect x="13" y="14" width="10" height="9" rx="1" fill="#d6d6d6"/><path d="M16 16L20 21M20 16L16 21" stroke="#fff" stroke-width="1.3"/></g><g transform="translate(830.0,112.0) scale(0.917)"><path d="M2 4Q6 1 14 3Q22 2 22 8Q21 13 14 13Q10 14 10 20Q6 22 4 18Q1 12 2 4Z" fill="#d4d4d4" stroke="#c8c8c8"/></g><g transform="translate(863.0,112.0) scale(0.917)"><path d="M6 20Q1 16 4 10L14 3Q20 0 22 6Q23 11 17 14L9 20Q7 21 6 20Z" fill="#d0d0d0" stroke="#c0c0c0"/><path d="M8 15L16 8" stroke="#e0e0e0" stroke-width="2"/></g><g transform="translate(896.0,112.0) scale(0.917)"><path d="M3 3L9 13L19 3M9 13V21" stroke="#d0d0d0" fill="none"/><rect x="16" y="2" width="4" height="3" fill="none" stroke="#d0d0d0"/><rect x="13" y="13" width="9" height="9" rx="1.5" fill="#cfcfcf"/><circle cx="17.5" cy="17.5" r="2" fill="none" stroke="#fff" stroke-width="1.1"/></g><g transform="translate(929.0,112.0) scale(0.917)"><path d="M12 2V22M2 12H22" stroke="#d0d0d0"/><circle cx="12" cy="12" r="2.5" fill="none" stroke="#cfcfcf"/><rect x="17" y="3" width="4" height="4" fill="none" stroke="#d0d0d0"/><rect x="3" y="17" width="4" height="4" fill="none" stroke="#d0d0d0"/></g><g transform="translate(962.0,112.0) scale(0.917)"><circle cx="6" cy="8" r="5" fill="#d6d6d6"/><circle cx="17" cy="8" r="5" fill="#d6d6d6"/><path d="M8 22L14 10M16 22L10 10" stroke="#c8c8c8" stroke-width="1.5"/><circle cx="8" cy="21" r="2" fill="none" stroke="#c8c8c8"/><circle cx="16" cy="21" r="2" fill="none" stroke="#c8c8c8"/></g><g transform="translate(994.0,112.0) scale(0.917)"><circle cx="6" cy="8" r="5" fill="#d6d6d6"/><circle cx="17" cy="8" r="5" fill="#d6d6d6"/><path d="M8 22L14 10M16 22L10 10" stroke="#c8c8c8" stroke-width="1.5"/><circle cx="8" cy="21" r="2" fill="none" stroke="#c8c8c8"/><circle cx="16" cy="21" r="2" fill="none" stroke="#c8c8c8"/></g><g transform="translate(1028.0,112.0) scale(0.917)"><circle cx="7" cy="9" r="5.5" fill="#d6d6d6"/><circle cx="17" cy="9" r="5.5" fill="#d6d6d6"/><path d="M9 7H16M9 11H16" stroke="#c4c4c4"/><path d="M4 14Q6 20 12 22" stroke="#c8c8c8" fill="none" stroke-width="1.3"/></g><g transform="translate(1061.0,112.0) scale(0.917)"><path d="M2 5H22M2 12H22M2 19H22M6 3V21M16 3V21" stroke="#d4d4d4"/><path d="M9 5H13M9 12H13M9 19H13" stroke="#c4c4c4" stroke-width="2"/></g><g transform="translate(1094.0,112.0) scale(0.917)"><path d="M12 5L21 10L12 13Z" fill="#d8d8d8"/><path d="M12 5V22L6 22Z" fill="none" stroke="#d0d0d0"/><path d="M7 4Q2 9 5 16" stroke="#d0d0d0" fill="none" stroke-width="1.3"/></g><g transform="translate(1116.0,112.0) scale(0.917)"><path d="M7 10H14L10.5 14Z" fill="#cfcfcf"/></g><g transform="translate(1133.0,112.0) scale(0.917)"><path d="M8 4V21M12 4V21" stroke="#c4c4c4" stroke-width="1.4" stroke-dasharray="1.2 2.6"/></g><g transform="translate(1155.0,112.0) scale(0.917)"><path d="M4 21V12Q4 4 13 3H21" stroke="#d0d0d0" fill="none" stroke-width="1.4"/><rect x="2" y="19" width="4" height="4" fill="none" stroke="#c8c8c8"/><rect x="19" y="1" width="4" height="4" fill="none" stroke="#c8c8c8"/><rect x="13" y="13" width="9" height="9" rx="1.5" fill="#cfcfcf"/><circle cx="17.5" cy="17.5" r="2" fill="none" stroke="#fff" stroke-width="1.1"/></g><g transform="translate(1176.0,112.0) scale(0.917)"><path d="M7 10H14L10.5 14Z" fill="#cfcfcf"/></g><g transform="translate(1200.0,112.0) scale(0.917)"><circle cx="10" cy="10" r="7.5" fill="none" stroke="#d6d6d6" stroke-width="3"/><rect x="13" y="13" width="9" height="9" rx="1.5" fill="#cfcfcf"/><circle cx="17.5" cy="17.5" r="2" fill="none" stroke="#fff" stroke-width="1.1"/></g><g transform="translate(1221.0,112.0) scale(0.917)"><path d="M7 10H14L10.5 14Z" fill="#cfcfcf"/></g><g transform="translate(1245.0,112.0) scale(0.917)"><ellipse cx="12" cy="9" rx="9" ry="5" fill="none" stroke="#d6d6d6" stroke-width="2" transform="rotate(-25 12 9)"/><rect x="13" y="13" width="9" height="9" rx="1.5" fill="#cfcfcf"/><circle cx="17.5" cy="17.5" r="2" fill="none" stroke="#fff" stroke-width="1.1"/></g><g transform="translate(1266.0,112.0) scale(0.917)"><path d="M7 10H14L10.5 14Z" fill="#cfcfcf"/></g><g transform="translate(1291.0,112.0) scale(0.917)"><rect x="2" y="3" width="17" height="13" fill="none" stroke="#d4d4d4" stroke-width="2"/><rect x="7" y="6" width="5" height="5" fill="none" stroke="#d0d0d0"/><rect x="13" y="13" width="9" height="9" rx="1.5" fill="#cfcfcf"/><circle cx="17.5" cy="17.5" r="2" fill="none" stroke="#fff" stroke-width="1.1"/></g><g transform="translate(1311.0,112.0) scale(0.917)"><path d="M7 10H14L10.5 14Z" fill="#cfcfcf"/></g><g transform="translate(1336.0,112.0) scale(0.917)"><path d="M4 4L13 2L20 8L17 16L7 17Z" fill="none" stroke="#d6d6d6" stroke-width="2.5"/><rect x="13" y="13" width="9" height="9" rx="1.5" fill="#cfcfcf"/><circle cx="17.5" cy="17.5" r="2" fill="none" stroke="#fff" stroke-width="1.1"/></g><g transform="translate(1356.0,112.0) scale(0.917)"><path d="M7 10H14L10.5 14Z" fill="#cfcfcf"/></g><g transform="translate(1374.0,112.0) scale(0.917)"><path d="M8 4V21M12 4V21" stroke="#c4c4c4" stroke-width="1.4" stroke-dasharray="1.2 2.6"/></g><g transform="translate(1397.0,112.0) scale(0.917)"><path d="M3 10Q3 22 14 21L22 16L19 11L12 15Q9 16 8 13L15 7L12 2Z" fill="#d01818" stroke="#801010" stroke-width="0.8"/><path d="M12 2L15 7L18 5L15 0Z M19 11L22 16L24 14L21 9Z" fill="#f0f0f0" stroke="#888" stroke-width="0.6"/></g><g transform="translate(1430.0,112.0) scale(0.917)"><path d="M3 4L9 12L15 4M9 12V20" fill="none" stroke="#d4d4d4"/><path d="M14 10H21M14 14H21" stroke="#d0d0d0" stroke-dasharray="1.5 1"/></g><g transform="translate(1472.0,112.0) scale(0.917)"><path d="M7 10H14L10.5 14Z" fill="#cfcfcf"/></g><g transform="translate(1740.0,112.0) scale(0.917)"><path d="M12 12L4 6M12 12L22 8M12 12V23" stroke="#5aa060" stroke-width="1.6"/><circle cx="12" cy="12" r="2" fill="#fff" stroke="#555"/></g><g transform="translate(1773.0,112.0) scale(0.917)"><path d="M3 3Q8 -1 16 3Q22 4 21 10Q19 14 14 14Q12 20 8 22Q3 22 4 16Q1 10 3 3Z" fill="#6aaa60" stroke="#333" stroke-width="1"/><path d="M13 2Q20 1 22 6Q22 12 15 11Z" fill="#aaa" stroke="#333" stroke-width="0.8"/><path d="M19 20H23L21 23Z" fill="#333"/></g><g transform="translate(1806.0,112.0) scale(0.917)"><path d="M3 3L21 21M21 3L3 21" stroke="#d8d8d8" stroke-width="2"/></g><g transform="translate(1839.0,112.0) scale(0.917)"><path d="M3 3L21 21M21 3L3 21" stroke="#d4d4d4" stroke-width="2"/><path d="M7 12L12 7L17 12L12 17Z" fill="#d0d0d0"/></g><g transform="translate(1861.0,112.0) scale(0.917)"><path d="M7 10H14L10.5 14Z" fill="#cfcfcf"/></g><g transform="translate(1884.0,112.0) scale(0.917)"><path d="M3 20L8 12L13 18L20 4" stroke="#d4d4d4" stroke-width="2" fill="none"/><circle cx="8" cy="12" r="2" fill="none" stroke="#d0d0d0"/></g><g transform="translate(-3.0,151.0) scale(0.917)"><path d="M8 4V21M12 4V21" stroke="#c4c4c4" stroke-width="1.4" stroke-dasharray="1.2 2.6"/></g><g transform="translate(19.0,151.0) scale(0.917)"><rect x="2" y="2" width="20" height="20" fill="#f0f0f0" stroke="#d0d0d0"/><path d="M2 2L10 12M10 2L2 12M2 12H22M10 12V22M2 17H10" stroke="#d4d4d4" fill="none"/><path d="M8 20L20 6" stroke="#c8c8c8" stroke-width="2.5"/></g><g transform="translate(52.0,151.0) scale(0.917)"><rect x="2" y="2" width="20" height="20" fill="#e8e8e8" stroke="#d0d0d0"/><path d="M2 2L22 14M2 12H12V22" stroke="#d4d4d4" fill="none"/><path d="M12 10L22 19L18 19L20 23L13 22Z" fill="#fff" stroke="#c4c4c4"/></g><g transform="translate(73.0,151.0) scale(0.917)"><path d="M7 10H14L10.5 14Z" fill="#cfcfcf"/></g><g transform="translate(97.0,151.0) scale(0.917)"><rect x="2" y="2" width="8" height="8" fill="none" stroke="#d0d0d0"/><rect x="2" y="13" width="8" height="8" fill="none" stroke="#d0d0d0"/><path d="M2 2L10 10M10 2L2 10M2 13L10 21M10 13L2 21" stroke="#d8d8d8"/><text x="11" y="21" font-family="Liberation Serif" font-size="15" fill="#d0d0d0">ε</text><path d="M14 6L17 2L21 6L17 9Z" fill="none" stroke="#d0d0d0"/></g><g transform="translate(130.0,151.0) scale(0.917)"><path d="M2 2H22V22H2Z M2 2L12 22L22 2M2 22L12 10L22 22" stroke="#d4d4d4" fill="none"/><circle cx="12" cy="10" r="2" fill="none" stroke="#d0d0d0"/></g><g transform="translate(152.0,151.0) scale(0.917)"><path d="M7 10H14L10.5 14Z" fill="#cfcfcf"/></g><g transform="translate(169.0,151.0) scale(0.917)"><path d="M8 4V21M12 4V21" stroke="#c4c4c4" stroke-width="1.4" stroke-dasharray="1.2 2.6"/></g><g transform="translate(192.0,151.0) scale(0.917)"><path d="M3 6L10 3L17 10M17 10L20 16" stroke="#2a5aa0" fill="none"/><circle cx="3" cy="6" r="1.6" fill="#4a80c0"/><circle cx="17" cy="10" r="1.6" fill="#4a80c0"/><text x="2" y="21" font-family="Liberation Sans" font-weight="bold" font-size="14" fill="#4a80c0">A</text><path d="M19 1L20 4L23 4L21 6L22 9L19 7L16 9L17 6L15 4L18 4Z" fill="#4a80c0"/><rect x="14" y="15" width="9" height="9" rx="1.5" fill="#d8b020"/><circle cx="18.5" cy="19.5" r="2.2" fill="none" stroke="#fff" stroke-width="1.2"/></g><g transform="translate(213.0,151.0) scale(0.917)"><path d="M7 10H14L10.5 14Z" fill="#555"/></g><g transform="translate(235.0,151.0) scale(0.917)"><rect x="2" y="2" width="19" height="19" fill="none" stroke="#555" stroke-dasharray="2 2"/><path d="M6 3L18 15L13 15L16 21L13 23L10 17L6 20Z" fill="#fff" stroke="#111" stroke-width="1.2"/></g><g transform="translate(269.0,151.0) scale(0.917)"><path d="M3 3H18L11 19L4 17Z" fill="none" stroke="#222" stroke-width="1.2"/><circle cx="3" cy="3" r="2.3" fill="#2a70d8"/><circle cx="18" cy="3" r="2.3" fill="#2a70d8"/><circle cx="11" cy="19" r="2.3" fill="#2a70d8"/><circle cx="4" cy="17" r="2.3" fill="#2a70d8"/><rect x="15" y="15" width="9" height="9" rx="1.5" fill="#4f9a4f"/><path d="M19.5 17V22M17 19.5H22" stroke="#fff" stroke-width="1.8"/></g><g transform="translate(302.0,151.0) scale(0.917)"><path d="M5 3H18M5 3L2 11L8 20" fill="none" stroke="#222" stroke-width="1.2"/><circle cx="5" cy="3" r="2.3" fill="#2a70d8"/><circle cx="18" cy="3" r="2.3" fill="#2a70d8"/><circle cx="2" cy="11" r="2.3" fill="#2a70d8"/><circle cx="8" cy="20" r="2.3" fill="#2a70d8"/><rect x="15" y="15" width="9" height="9" rx="1.5" fill="#4f9a4f"/><path d="M19.5 17V22M17 19.5H22" stroke="#fff" stroke-width="1.8"/></g><g transform="translate(336.0,151.0) scale(0.917)"><path d="M10 1L13 8L20 8L14.5 12.5L16.5 20L10 15.5L3.5 20L5.5 12.5L0 8L7 8Z" fill="#f6d850" stroke="#c0a030"/><rect x="13" y="14" width="9" height="9" rx="1.5" fill="#4f9a4f"/><path d="M17.5 16V21M15 18.5H20" stroke="#fff" stroke-width="1.8"/></g><g transform="translate(369.0,151.0) scale(0.917)"><text x="3" y="15" font-family="Liberation Serif" font-size="15" fill="#333">T</text><rect x="2" y="16" width="2" height="2" fill="#555"/><rect x="13" y="14" width="9" height="9" rx="1.5" fill="#4f9a4f"/><path d="M17.5 16V21M15 18.5H20" stroke="#fff" stroke-width="1.8"/></g><g transform="translate(389.0,151.0) scale(0.917)"><path d="M12 3V21" stroke="#d0d0d0"/></g><g transform="translate(408.0,151.0) scale(0.917)"><path d="M2 3H22V16H10L6 21V16H2Z" fill="#f8f8f8" stroke="#777"/><text x="8" y="14" font-family="Liberation Serif" font-size="12" fill="#333">T</text></g><g transform="translate(430.0,151.0) scale(0.917)"><path d="M7 10H14L10.5 14Z" fill="#555"/></g><g transform="translate(447.0,151.0) scale(0.917)"><path d="M8 4V21M12 4V21" stroke="#c4c4c4" stroke-width="1.4" stroke-dasharray="1.2 2.6"/></g><g transform="translate(463.0,151.0) scale(0.917)"><path d="M8 4V21M12 4V21" stroke="#c4c4c4" stroke-width="1.4" stroke-dasharray="1.2 2.6"/></g><g transform="translate(486.0,151.0) scale(0.917)"><rect x="0" y="0" width="24" height="24" fill="#5aaa40"/><circle cx="14" cy="10" r="6.5" fill="none" stroke="#e8f8e0" stroke-width="2.4"/><path d="M3 21L9.5 14.5" stroke="#e8f8e0" stroke-width="3"/></g><g transform="translate(518.0,151.0) scale(0.917)"><rect x="1" y="3" width="21" height="20" fill="#f0d850"/><path d="M1 10Q8 8 12 14Q16 20 22 17" stroke="#6aa0d8" stroke-width="3" fill="none"/><rect x="1" y="3" width="5" height="5" fill="#e04040"/><path d="M12 14L22 2" stroke="#a06020" stroke-width="2.5"/></g><g transform="translate(-4.0,1014.0) scale(1.000)"><path d="M8 4V21M12 4V21" stroke="#c4c4c4" stroke-width="1.4" stroke-dasharray="1.2 2.6"/></g><g transform="translate(18.0,1014.0) scale(1.000)"><circle cx="12" cy="11" r="10" fill="#c8d8ec" stroke="#7a9ab8"/><path d="M6 7Q9 5 11 8L9 12L6 11Z M13 6L18 5L19 10L15 12Z" fill="#4a6a90"/><circle cx="7" cy="19" r="3.5" fill="#111"/><circle cx="17" cy="19" r="3.5" fill="#111"/><rect x="7" y="16" width="10" height="3" fill="#111"/></g><g transform="translate(44.0,1014.0) scale(1.000)"><path d="M8 4V21M12 4V21" stroke="#c4c4c4" stroke-width="1.4" stroke-dasharray="1.2 2.6"/></g><g transform="translate(67.0,1014.0) scale(1.000)"><ellipse cx="12" cy="5" rx="9" ry="3.5" fill="#6a9ad0" stroke="#3a6aa0"/><path d="M3 5V19Q12 25 21 19V5" fill="#5a8ac0" stroke="#3a6aa0"/><path d="M3 10Q12 15 21 10M3 15Q12 20 21 15" stroke="#a8c8e8" fill="none"/></g><g transform="translate(93.0,1014.0) scale(1.000)"><path d="M8 4V21M12 4V21" stroke="#c4c4c4" stroke-width="1.4" stroke-dasharray="1.2 2.6"/></g><g transform="translate(116.0,1014.0) scale(1.000)"><path d="M11 1Q5 1 5 5V8H12V9H3Q0 9 0 14Q0 19 3 19H5V15Q5 12 9 12H14Q17 12 17 9V5Q17 1 11 1Z" fill="#3a7ab8"/><path d="M12 23Q18 23 18 19V16H11V15H20Q23 15 23 10Q23 5 20 5H18V9Q18 12 14 12H9Q6 12 6 15V19Q6 23 12 23Z" fill="#f8d040"/><path d="M15 19L20 21L15 23" stroke="#333" fill="none"/></g><g transform="translate(149.0,1014.0) scale(1.000)"><circle cx="12" cy="12" r="11" fill="#101830" stroke="#2a3a70"/><path d="M4 16Q8 8 16 6Q12 12 10 20Z" fill="#3a8a4a"/><path d="M5 17Q12 12 20 14Q16 20 8 21Z" fill="#3a70c0" opacity="0.8"/></g></svg>
<div style="position:absolute;left:1490px;top:109px;width:126px;height:28px;background:#ececec;box-sizing:border-box;border:1px solid #c8c8c8;border-radius:3px"></div>
<div style="position:absolute;left:1601px;top:110px;width:1px;height:26px;background:#d8d8d8"></div>
<svg style="left:1603px;top:113px" width="12" height="20"><path d="M2 6L6 2L10 6Z" fill="#c8c8c8"/><path d="M2 13H10L6 17Z" fill="#c8c8c8"/></svg>
<div class="t" style="left:1495px;top:117.2px;font-size:18px;color:#a8a8a8;font-weight:normal;font-family:'Liberation Mono', monospace;letter-spacing:-0.60px;">12</div>
<div style="position:absolute;left:1618px;top:108px;width:116px;height:30px;background:linear-gradient(#f4f4f4,#ececec);box-sizing:border-box;border:1px solid #cdcdcd;border-radius:3px"></div>
<div class="t" style="left:1622px;top:117.2px;font-size:18px;color:#a8a8a8;font-weight:normal;font-family:'Liberation Mono', monospace;letter-spacing:-0.60px;">px</div>
<svg style="left:1716px;top:121px" width="11" height="6"><path d="M0 0H10L5 5Z" fill="#c8c8c8"/></svg>
<div style="position:absolute;left:5px;top:1050px;width:270px;height:29px;background:#fff;box-sizing:border-box;border:1px solid #c6c6c6;border-radius:3px"></div>
<svg style="left:13px;top:1057px" width="16" height="16"><circle cx="6" cy="6" r="4.5" fill="none" stroke="#777" stroke-width="1.3"/><path d="M9.5 9.5L13 13" stroke="#777" stroke-width="1.6"/></svg>
<div class="t" style="left:35px;top:1056.2px;font-size:18px;color:#6e6e6e;font-weight:normal;font-family:'Liberation Mono', monospace;letter-spacing:-0.60px;">Type to locate (Ctrl+K)</div>
<div class="t" style="left:758px;top:1056.2px;font-size:18px;color:#1e1e1e;font-weight:normal;font-family:'Liberation Mono', monospace;letter-spacing:-0.60px;">Coordinate</div>
<div style="position:absolute;left:863px;top:1049px;width:143px;height:30px;background:#fff;box-sizing:border-box;border:1px solid #c6c6c6;border-radius:3px"></div>
<div class="t" style="left:869px;top:1056.2px;font-size:18px;color:#1e1e1e;font-weight:normal;font-family:'Liberation Mono', monospace;letter-spacing:-0.60px;">14.6725°,121°</div>
<svg style="left:1009px;top:1055px" width="18" height="18"><circle cx="8" cy="9" r="5" fill="none" stroke="#333" stroke-width="1.6"/><path d="M3 2L14 15M10 3L16 3L14 8" stroke="#333" stroke-width="1.5" fill="none"/></svg>
<div class="t" style="left:1039px;top:1056.2px;font-size:18px;color:#1e1e1e;font-weight:normal;font-family:'Liberation Mono', monospace;letter-spacing:-0.60px;">Scale</div>
<div style="position:absolute;left:1092px;top:1049px;width:119px;height:30px;background:#fff;box-sizing:border-box;border:1px solid #c6c6c6;border-radius:3px"></div>
<div style="position:absolute;left:1189px;top:1050px;width:1px;height:28px;background:#d6d6d6"></div>
<div class="t" style="left:1097px;top:1056.2px;font-size:18px;color:#1e1e1e;font-weight:normal;font-family:'Liberation Mono', monospace;letter-spacing:-0.60px;">1:193214</div>
<svg style="left:1193px;top:1061px" width="11" height="6"><path d="M0 0H10L5 5Z" fill="#444"/></svg>
<svg style="left:1222px;top:1054px" width="14" height="18"><path d="M3 8V5Q3 1 7 1Q11 1 11 5V8" fill="none" stroke="#444" stroke-width="1.8"/><rect x="1.5" y="8" width="11" height="9" rx="1" fill="#444"/></svg>
<div class="t" style="left:1244px;top:1056.2px;font-size:18px;color:#1e1e1e;font-weight:normal;font-family:'Liberation Mono', monospace;letter-spacing:-0.60px;">Magnifier</div>
<div style="position:absolute;left:1340px;top:1049px;width:93px;height:30px;background:#fff;box-sizing:border-box;border:1px solid #c6c6c6;border-radius:3px"></div>
<div style="position:absolute;left:1418px;top:1050px;width:1px;height:28px;background:#d6d6d6"></div>
<svg style="left:1419px;top:1054px" width="12" height="20"><path d="M2 6L6 2L10 6Z" fill="#555"/><path d="M2 13H10L6 17Z" fill="#555"/></svg>
<div class="t" style="left:1345px;top:1056.2px;font-size:18px;color:#1e1e1e;font-weight:normal;font-family:'Liberation Mono', monospace;letter-spacing:-0.60px;">100%</div>
<div class="t" style="left:1443px;top:1056.2px;font-size:18px;color:#1e1e1e;font-weight:normal;font-family:'Liberation Mono', monospace;letter-spacing:-0.60px;">Rotation</div>
<div style="position:absolute;left:1533px;top:1049px;width:115px;height:30px;background:#fff;box-sizing:border-box;border:1px solid #c6c6c6;border-radius:3px"></div>
<div style="position:absolute;left:1634px;top:1050px;width:1px;height:28px;background:#d6d6d6"></div>
<svg style="left:1635px;top:1054px" width="12" height="20"><path d="M2 6L6 2L10 6Z" fill="#555"/><path d="M2 13H10L6 17Z" fill="#555"/></svg>
<div class="t" style="left:1538px;top:1056.2px;font-size:18px;color:#1e1e1e;font-weight:normal;font-family:'Liberation Mono', monospace;letter-spacing:-0.60px;">0.0 °</div>
<div style="position:absolute;left:1655px;top:1057px;width:14px;height:15px;background:#fff;box-sizing:border-box;border:1px solid #a8a8a8;border-radius:2px"></div>
<svg style="left:1657px;top:1059px" width="12" height="12"><path d="M1.5 6L4.5 10L9.5 1.5" fill="none" stroke="#111" stroke-width="1.6"/></svg>
<div class="t" style="left:1675px;top:1056.2px;font-size:18px;color:#1e1e1e;font-weight:normal;font-family:'Liberation Mono', monospace;letter-spacing:-0.60px;">Render</div>
<svg style="left:1750px;top:1056px" width="16" height="16"><circle cx="8" cy="8" r="6.5" fill="#bbb" stroke="#666"/><path d="M1.5 8H14.5M8 1.5V14.5M3 4.5H13M3 11.5H13" stroke="#666" stroke-width="0.8"/></svg>
<div class="t" style="left:1769px;top:1056.2px;font-size:18px;color:#1e1e1e;font-weight:normal;font-family:'Liberation Mono', monospace;letter-spacing:-0.60px;">EPSG:4326</div>
<svg style="left:1896px;top:1056px" width="20" height="18"><ellipse cx="9.5" cy="8" rx="8.5" ry="7" fill="#666"/><path d="M12 13L17 17L11 14Z" fill="#666"/><circle cx="5.5" cy="8" r="1.2" fill="#fff"/><circle cx="9.5" cy="8" r="1.2" fill="#fff"/><circle cx="13.5" cy="8" r="1.2" fill="#fff"/></svg>
<div style="position:absolute;left:0px;top:0px;width:1922px;height:1px;background:#000"></div>
<div style="position:absolute;left:0px;top:0px;width:1px;height:1082px;background:#000"></div>
<div style="position:absolute;left:1921px;top:0px;width:1px;height:1082px;background:#000"></div>
<div style="position:absolute;left:0px;top:1081px;width:1922px;height:1px;background:#000"></div>
</body></html>
